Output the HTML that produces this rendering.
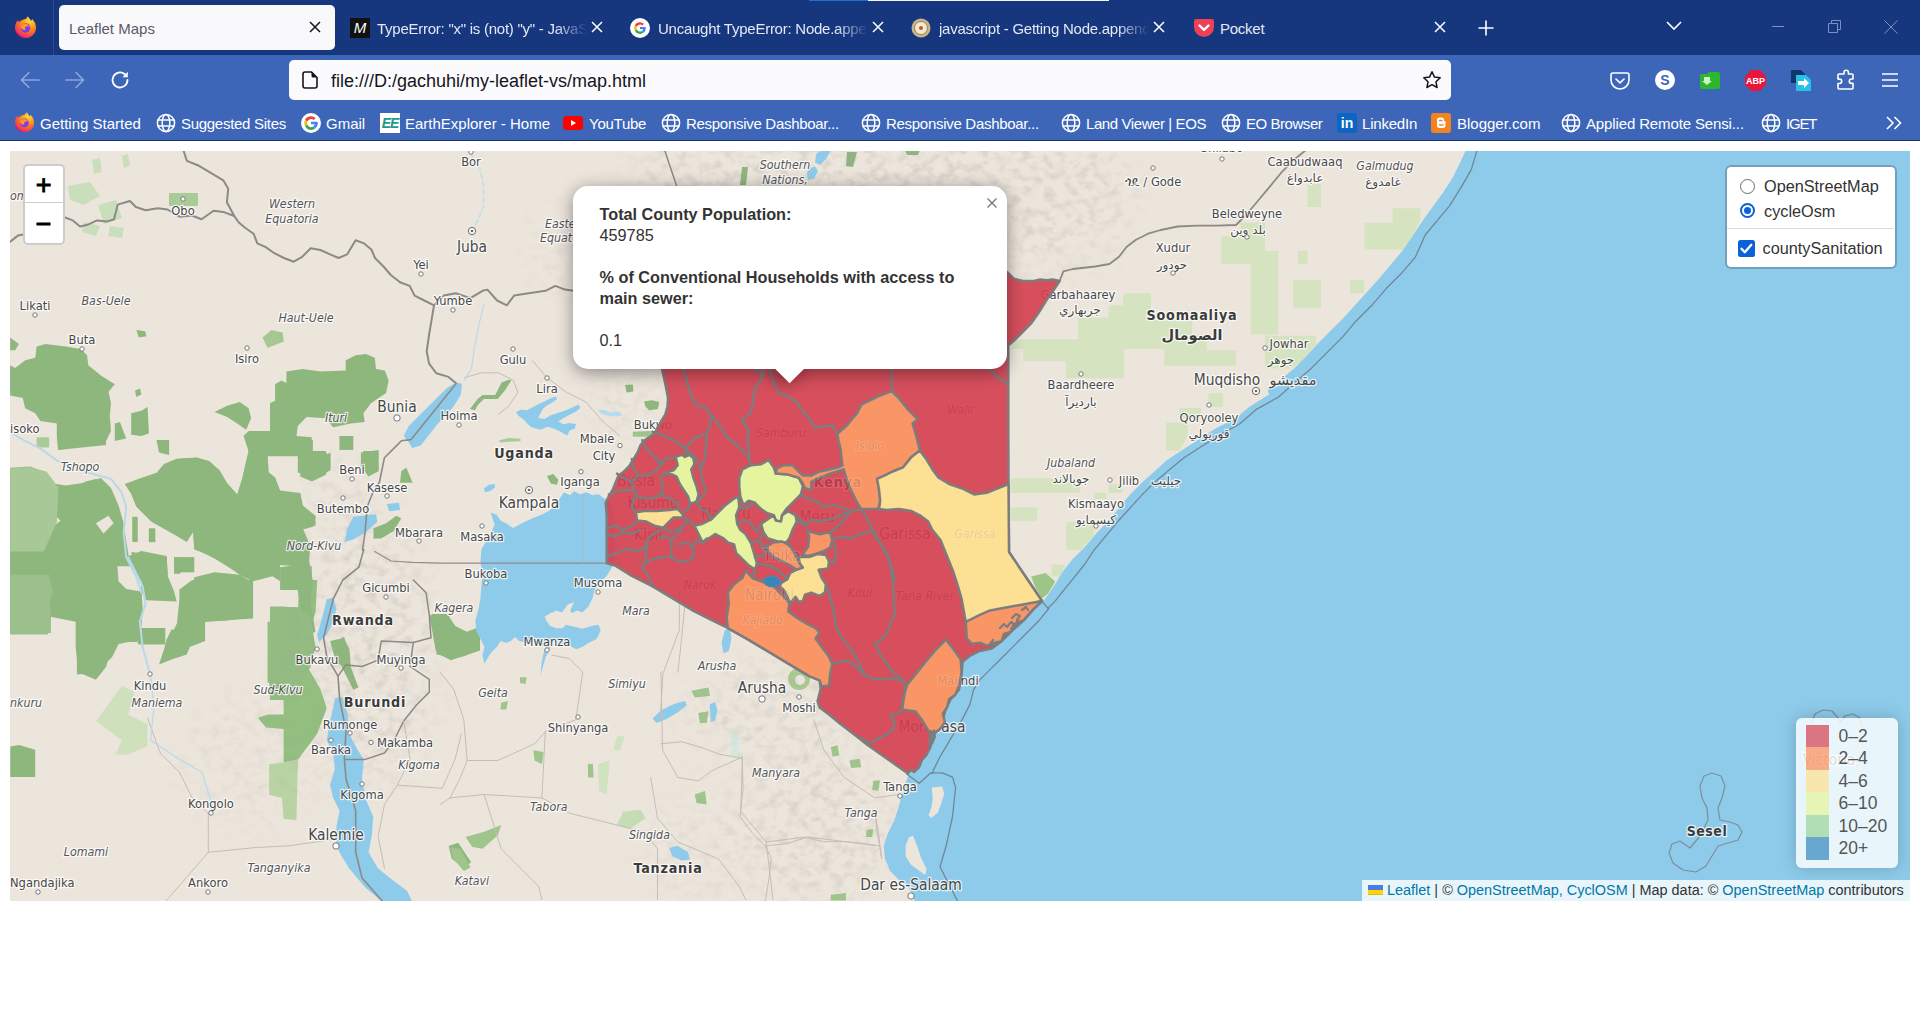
<!DOCTYPE html>
<html lang="en">
<head>
<meta charset="utf-8">
<title>Leaflet Maps</title>
<style>
*{box-sizing:border-box}
html,body{margin:0;padding:0;background:#fff;width:1920px;height:1030px;overflow:hidden}
body{font-family:"Liberation Sans","DejaVu Sans",sans-serif;position:relative}
.abs{position:absolute}
#tabbar{position:absolute;left:0;top:0;width:1920px;height:55px;background:#16377d}
#navbar{position:absolute;left:0;top:55px;width:1920px;height:85px;background:#3e66b8}
#chromeline{position:absolute;left:0;top:140px;width:1920px;height:1px;background:#1c2f63}
.tab{position:absolute;top:6px;height:45px;font-size:15px;line-height:45px;letter-spacing:-0.25px;color:#e4e8f6;white-space:nowrap;overflow:hidden}
.tab.active{top:5px;line-height:47px;letter-spacing:0;background:#f9f9fb;border-radius:5px;color:#5a5b66;left:59px;width:276px;padding-left:10px}
.tx{position:absolute;top:19px;width:16px;height:16px}
.bm{position:absolute;top:107px;height:34px;line-height:34px;font-size:15px;color:#fff;white-space:nowrap}
.ico{position:absolute}
#urlbar{position:absolute;left:289px;top:60px;width:1162px;height:40px;background:#fbfbfe;border-radius:5px}
#urltext{position:absolute;left:42px;top:0;line-height:42px;font-size:18px;color:#15141a;white-space:nowrap}
#map{position:absolute;left:10px;top:151px;width:1900px;height:750px;overflow:hidden;background:#e9e3da}
#map svg.base{position:absolute;left:0;top:0}
.lg{line-height:22.5px;white-space:nowrap}
.lk{color:#0078a8}

#map text{font-family:"DejaVu Sans","Liberation Sans",sans-serif;font-stretch:condensed;paint-order:stroke;stroke:rgba(255,255,255,.75);stroke-width:2.5px;stroke-linejoin:round;fill:#484848}
#map .c0{font-size:20px}
#map .c1{font-size:15.4px}
#map .c2{font-size:12.8px}
#map .it{font-size:12.3px;font-style:italic;fill:#555}
#map .co{font-size:14.2px;font-weight:bold;letter-spacing:.8px;fill:#3c3c3c}
#map .co2{font-size:14px;font-weight:bold;letter-spacing:.5px;fill:#3c3c3c}
#map .ar{font-size:12px;font-stretch:normal}
#map .ar1{font-size:14.5px;font-stretch:normal}
#map .arb{font-size:14.5px;font-weight:bold;font-stretch:normal;fill:#3c3c3c}

</style>
</head>
<body>
<div id="tabbar"></div>
<div id="navbar"></div>
<div id="chromeline"></div>
<!--CHROME-->
<!-- top strip -->
<div class="abs" style="left:809px;top:0;width:59px;height:1px;background:#1f6fd6"></div>
<div class="abs" style="left:868px;top:0;width:241px;height:1px;background:#f4f6fc"></div>
<!-- firefox logo -->
<svg class="abs" style="left:14px;top:16px" width="23" height="23" viewBox="0 0 24 24"><defs><radialGradient id="fxg" cx="0.7" cy="0.2" r="0.9"><stop offset="0" stop-color="#ffde3a"/><stop offset="0.45" stop-color="#ff8a16"/><stop offset="0.85" stop-color="#f2385a"/><stop offset="1" stop-color="#c60084"/></radialGradient></defs><path d="M12 3.2c1.2-1 1.8-2 2-3 2 1.6 3.2 3.4 3.6 5 .8-.6 1.2-1.4 1.3-2.2C21.600 5.600 23 8.800 23 12.200 23 18.200 18.200 23 12 23S1 18.200 1 12.200c0-3.200 1.200-6 3.200-8 .1 1 .4 1.800 1 2.400C6.600 4.800 9 3.600 12 3.200z" fill="url(#fxg)"/><circle cx="12" cy="12.500" r="5" fill="#7a3ff0"/><path d="M7 11c1-2.500 3-3.500 5.500-3 2 .5 3.500 2 4 4-.8-1-2-1.500-3.200-1.200-1.800.5-2.300 2.200-1.300 3.700-2.500.200-4.800-1.200-5-3.500z" fill="#ff9a1f"/></svg>
<div class="abs" style="left:53px;top:0;width:1px;height:55px;background:#31498f"></div>
<!-- tabs -->
<div class="tab active">Leaflet Maps</div>
<svg class="tx" style="left:307px" viewBox="0 0 16 16"><path d="M3 3l10 10M13 3L3 13" stroke="#15141a" stroke-width="1.500" fill="none"/></svg>

<div class="abs" style="left:350px;top:18px;width:20px;height:20px;background:#111;color:#fff;font-size:15px;font-style:italic;line-height:20px;text-align:center">M</div>
<div class="tab" style="left:377px;width:210px;-webkit-mask-image:linear-gradient(90deg,#000 85%,transparent)">TypeError: "x" is (not) "y" - JavaScript</div>
<svg class="tx" style="left:589px" viewBox="0 0 16 16"><path d="M3 3l10 10M13 3L3 13" stroke="#fff" stroke-width="1.500" fill="none"/></svg>

<svg class="abs" style="left:630px;top:18px" width="20" height="20" viewBox="0 0 20 20"><circle cx="10" cy="10" r="10" fill="#fff"/><path d="M10 4.200a5.800 5.800 0 0 1 4 1.600l-1.700 1.700A3.400 3.400 0 0 0 6.800 8.700L4.800 7.200A5.800 5.800 0 0 1 10 4.200z" fill="#ea4335"/><path d="M4.800 7.200l2 1.500a3.400 3.400 0 0 0 0 2.600l-2 1.500a5.800 5.800 0 0 1 0-5.600z" fill="#fbbc05"/><path d="M4.800 12.800l2-1.500a3.400 3.400 0 0 0 5.100 1.700l1.900 1.500a5.800 5.800 0 0 1-9-1.700z" fill="#34a853"/><path d="M10 8.900h5.600a5.800 5.800 0 0 1-1.800 5.600l-1.900-1.500a3.200 3.200 0 0 0 1.300-1.900H10z" fill="#4285f4"/></svg>
<div class="tab" style="left:658px;width:210px;-webkit-mask-image:linear-gradient(90deg,#000 85%,transparent)">Uncaught TypeError: Node.appendChild</div>
<svg class="tx" style="left:870px" viewBox="0 0 16 16"><path d="M3 3l10 10M13 3L3 13" stroke="#fff" stroke-width="1.500" fill="none"/></svg>

<svg class="abs" style="left:911px;top:18px" width="20" height="20" viewBox="0 0 20 20"><circle cx="10" cy="10" r="9.500" fill="#c9b48a"/><circle cx="10" cy="10" r="6.500" fill="#f3ead2" stroke="#9a8558" stroke-width="1"/><circle cx="10" cy="10" r="2" fill="#c0563a"/></svg>
<div class="tab" style="left:939px;width:210px;-webkit-mask-image:linear-gradient(90deg,#000 85%,transparent)">javascript - Getting Node.appendChild</div>
<svg class="tx" style="left:1151px" viewBox="0 0 16 16"><path d="M3 3l10 10M13 3L3 13" stroke="#fff" stroke-width="1.500" fill="none"/></svg>

<svg class="abs" style="left:1194px;top:19px" width="20" height="18" viewBox="0 0 20 18"><path d="M2 0h16a2 2 0 0 1 2 2v6a10 10 0 0 1-20 0V2a2 2 0 0 1 2-2z" fill="#ef4056"/><path d="M5.500 6.500L10 10.800l4.500-4.300" stroke="#fff" stroke-width="2.400" fill="none" stroke-linecap="round" stroke-linejoin="round"/></svg>
<div class="tab" style="left:1220px;width:100px">Pocket</div>
<svg class="tx" style="left:1432px" viewBox="0 0 16 16"><path d="M3 3l10 10M13 3L3 13" stroke="#fff" stroke-width="1.500" fill="none"/></svg>

<svg class="abs" style="left:1478px;top:20px" width="16" height="16" viewBox="0 0 16 16"><path d="M8 0.500v15M0.500 8h15" stroke="#fff" stroke-width="1.600"/></svg>
<svg class="abs" style="left:1666px;top:21px" width="16" height="10" viewBox="0 0 16 10"><path d="M1 1l7 7 7-7" stroke="#fff" stroke-width="1.600" fill="none"/></svg>
<div class="abs" style="left:1772px;top:26px;width:12px;height:1px;background:#7e8fc0"></div>
<svg class="abs" style="left:1828px;top:20px" width="14" height="14" viewBox="0 0 14 14"><path d="M0.500 3.500h9v9h-9zM3.500 3.500v-3h9v9h-3" stroke="#7e8fc0" stroke-width="1" fill="none"/></svg>
<svg class="abs" style="left:1884px;top:20px" width="14" height="14" viewBox="0 0 14 14"><path d="M0.500 0.500l13 13M13.500 0.500l-13 13" stroke="#7e8fc0" stroke-width="1" fill="none"/></svg>

<!-- nav buttons -->
<svg class="abs" style="left:20px;top:71px" width="20" height="18" viewBox="0 0 20 18"><path d="M9 1.500L1.500 9 9 16.500M1.500 9H19" stroke="#8da6dc" stroke-width="1.700" fill="none" stroke-linecap="round" stroke-linejoin="round"/></svg>
<svg class="abs" style="left:65px;top:71px" width="20" height="18" viewBox="0 0 20 18"><path d="M11 1.500L18.500 9 11 16.500M18.500 9H1" stroke="#8da6dc" stroke-width="1.700" fill="none" stroke-linecap="round" stroke-linejoin="round"/></svg>
<svg class="abs" style="left:110px;top:70px" width="20" height="20" viewBox="0 0 20 20"><path d="M17.500 10a7.500 7.500 0 1 1-2.600-5.700" stroke="#fff" stroke-width="1.800" fill="none" stroke-linecap="round"/><path d="M17.800 1.800v5.400h-5.400z" fill="#fff"/></svg>

<div id="urlbar">
<svg class="abs" style="left:13px;top:11px" width="16" height="18" viewBox="0 0 16 18"><path d="M3 1h6.500L15 6.500V15a2 2 0 0 1-2 2H3a2 2 0 0 1-2-2V3a2 2 0 0 1 2-2z" stroke="#15141a" stroke-width="1.600" fill="none"/><path d="M9.500 1v4a1.500 1.500 0 0 0 1.500 1.500h4z" fill="#15141a"/></svg>
<div id="urltext">file:///D:/gachuhi/my-leaflet-vs/map.html</div>
<svg class="abs" style="left:1133px;top:10px" width="20" height="20" viewBox="0 0 20 20"><path d="M10 1.800l2.500 5.300 5.700.7-4.200 4 1.100 5.700L10 14.700l-5.100 2.800L6 11.800l-4.200-4 5.700-.7z" stroke="#15141a" stroke-width="1.500" fill="none" stroke-linejoin="round"/></svg>
</div>

<!-- toolbar icons -->
<svg class="abs" style="left:1610px;top:72px" width="20" height="18" viewBox="0 0 20 18"><path d="M3 1h14a2 2 0 0 1 2 2v5a9 9 0 0 1-18 0V3a2 2 0 0 1 2-2z" stroke="#fff" stroke-width="1.600" fill="none"/><path d="M6 7l4 3.800L14 7" stroke="#fff" stroke-width="1.600" fill="none" stroke-linecap="round" stroke-linejoin="round"/></svg>
<div class="abs" style="left:1655px;top:70px;width:20px;height:20px;border-radius:10px;background:#fff;color:#3e66b8;font-weight:bold;font-size:14px;line-height:20px;text-align:center">S</div>
<svg class="abs" style="left:1700px;top:71px" width="20" height="18" viewBox="0 0 20 18"><path d="M0 3h7l2-2h9a2 2 0 0 1 2 2v13a2 2 0 0 1-2 2H2a2 2 0 0 1-2-2z" fill="#2fb62f"/><path d="M4 6h6v4h2l-5 4-5-4h2z" fill="#c9f5c0"/></svg>
<svg class="abs" style="left:1745px;top:70px" width="21" height="21" viewBox="0 0 21 21"><path d="M6.200 0h8.600L21 6.200v8.600L14.800 21H6.200L0 14.800V6.200z" fill="#e8173c"/><text x="10.500" y="14" font-family="Liberation Sans,sans-serif" font-size="9" font-weight="bold" fill="#fff" text-anchor="middle">ABP</text></svg>
<svg class="abs" style="left:1791px;top:70px" width="21" height="21" viewBox="0 0 21 21"><path d="M0 0h10l4 4v9H0z" fill="#12356e"/><path d="M5 5h10l5 5v11H5z" fill="#27c0e8"/><path d="M7 11h6V8l5 5-5 5v-3H7z" fill="#fff"/></svg>
<svg class="abs" style="left:1836px;top:69px" width="20" height="22" viewBox="0 0 20 22"><path d="M8 5V3.500a2.200 2.200 0 0 1 4.400 0V5H16a1 1 0 0 1 1 1v4h-1.500a2.200 2.200 0 0 0 0 4.400H17V19a1 1 0 0 1-1 1H3a1 1 0 0 1-1-1v-4.500h1.500a2.200 2.200 0 0 0 0-4.400H2V6a1 1 0 0 1 1-1z" stroke="#fff" stroke-width="1.600" fill="none" stroke-linejoin="round"/></svg>
<svg class="abs" style="left:1882px;top:73px" width="16" height="14" viewBox="0 0 16 14"><path d="M0 1h16M0 7h16M0 13h16" stroke="#fff" stroke-width="1.600"/></svg>

<!--/CHROME-->
<!--BM-->
<svg width="0" height="0" style="position:absolute"><defs>
<symbol id="globe" viewBox="0 0 20 20"><circle cx="10" cy="10" r="8.600" stroke="#fff" stroke-width="1.500" fill="none"/><ellipse cx="10" cy="10" rx="3.800" ry="8.600" stroke="#fff" stroke-width="1.500" fill="none"/><path d="M1.800 7h16.400M1.800 13h16.400" stroke="#fff" stroke-width="1.500"/></symbol>
</defs></svg>
<svg class="abs" style="left:14px;top:112px" width="21" height="21" viewBox="0 0 24 24"><path d="M12 3.200c1.200-1 1.800-2 2-3 2 1.600 3.200 3.400 3.600 5 .8-.6 1.200-1.400 1.300-2.200C21.600 5.600 23 8.800 23 12.200 23 18.200 18.200 23 12 23S1 18.200 1 12.200c0-3.200 1.200-6 3.200-8 .1 1 .4 1.800 1 2.400C6.600 4.800 9 3.600 12 3.200z" fill="url(#fxg)"/><circle cx="12" cy="12.500" r="5" fill="#7a3ff0"/><path d="M7 11c1-2.500 3-3.500 5.500-3 2 .5 3.500 2 4 4-.8-1-2-1.500-3.200-1.200-1.800.5-2.300 2.200-1.300 3.700-2.500.2-4.800-1.200-5-3.500z" fill="#ff9a1f"/></svg>
<div class="bm" style="left:40px">Getting Started</div>
<svg class="abs" style="left:156px;top:113px" width="20" height="20"><use href="#globe"/></svg>
<div class="bm" style="left:181px;letter-spacing:-0.29px">Suggested Sites</div>
<svg class="abs" style="left:301px;top:113px" width="20" height="20" viewBox="0 0 20 20"><circle cx="10" cy="10" r="10" fill="#fff"/><path d="M10 3.200a6.800 6.800 0 0 1 4.700 1.900l-2 2A4 4 0 0 0 6.300 8.500L4 6.700A6.800 6.800 0 0 1 10 3.200z" fill="#ea4335"/><path d="M4 6.700l2.300 1.800a4 4 0 0 0 0 3L4 13.300a6.800 6.800 0 0 1 0-6.600z" fill="#fbbc05"/><path d="M4 13.300l2.300-1.800a4 4 0 0 0 6 2l2.200 1.700A6.800 6.800 0 0 1 4 13.300z" fill="#34a853"/><path d="M10 8.700h6.600a6.800 6.800 0 0 1-2.100 6.500l-2.200-1.700a3.800 3.800 0 0 0 1.500-2.200H10z" fill="#4285f4"/></svg>
<div class="bm" style="left:326px">Gmail</div>
<div class="abs" style="left:380px;top:113px;width:20px;height:20px;background:#fff;color:#1f9a8a;font-size:14px;font-weight:bold;font-style:italic;line-height:20px;text-align:center;letter-spacing:-1px">EE</div>
<div class="bm" style="left:405px">EarthExplorer - Home</div>
<svg class="abs" style="left:563px;top:116px" width="20" height="14" viewBox="0 0 20 14"><rect width="20" height="14" rx="3.500" fill="#f00"/><path d="M8 4l5 3-5 3z" fill="#fff"/></svg>
<div class="bm" style="left:589px;letter-spacing:-0.25px">YouTube</div>
<svg class="abs" style="left:661px;top:113px" width="20" height="20"><use href="#globe"/></svg>
<div class="bm" style="left:686px;letter-spacing:-0.29px">Responsive Dashboar...</div>
<svg class="abs" style="left:861px;top:113px" width="20" height="20"><use href="#globe"/></svg>
<div class="bm" style="left:886px;letter-spacing:-0.29px">Responsive Dashboar...</div>
<svg class="abs" style="left:1061px;top:113px" width="20" height="20"><use href="#globe"/></svg>
<div class="bm" style="left:1086px;letter-spacing:-0.41px">Land Viewer | EOS</div>
<svg class="abs" style="left:1221px;top:113px" width="20" height="20"><use href="#globe"/></svg>
<div class="bm" style="left:1246px;letter-spacing:-0.45px">EO Browser</div>
<div class="abs" style="left:1337px;top:113px;width:20px;height:20px;border-radius:3px;background:#0a66c2;color:#fff;font-size:14px;font-weight:bold;line-height:20px;text-align:center">in</div>
<div class="bm" style="left:1362px;letter-spacing:-0.2px">LinkedIn</div>
<svg class="abs" style="left:1431px;top:113px" width="20" height="20" viewBox="0 0 20 20"><rect width="20" height="20" rx="3" fill="#f58220"/><path d="M6 7a2.500 2.500 0 0 1 2.500-2.500h2A2.500 2.500 0 0 1 13 7v1h1.500v4.500A2.500 2.500 0 0 1 12 15H8.500A2.500 2.500 0 0 1 6 12.500z" fill="#fff"/><path d="M8.500 7.500h2.500M8.500 12h3.500" stroke="#f58220" stroke-width="1.500" stroke-linecap="round"/></svg>
<div class="bm" style="left:1457px">Blogger.com</div>
<svg class="abs" style="left:1561px;top:113px" width="20" height="20"><use href="#globe"/></svg>
<div class="bm" style="left:1586px;letter-spacing:-0.13px">Applied Remote Sensi...</div>
<svg class="abs" style="left:1761px;top:113px" width="20" height="20"><use href="#globe"/></svg>
<div class="bm" style="left:1786px;letter-spacing:-1.2px">IGET</div>
<svg class="abs" style="left:1886px;top:116px" width="16" height="14" viewBox="0 0 16 14"><path d="M1 1l6 6-6 6M8.500 1l6 6-6 6" stroke="#fff" stroke-width="1.600" fill="none"/></svg>

<!--/BM-->
<div id="map">
<!--MAPSVG-->
<svg class="base" width="1900" height="750" viewBox="10 151 1900 750">
<rect x="10" y="151" width="1900" height="750" fill="#ece5dc"/>
<path d="M10.1,365.3 15.1,367.9 25.2,360.3 35.3,357.8 36.6,346.4 45.4,343.9 65.6,346.4 80.8,348.9 87.1,355.2 88.3,365.3 100.9,375.4 114.8,384.3 108.5,391.8 111,403.2 109.8,415.8 111,430.9 106,441 95.9,443.6 75.7,442.3 69.4,448.6 58,449.9 56.8,436 56.8,423.4 40.4,420.9 35.3,413.3 25.2,408.2 22.7,398.1 10.1,395.6Z" fill="#8eb77d" />
<path d="M10.1,337.6 18.9,343.9 15.1,350.2 10.1,350.2Z" fill="#8eb77d" />
<path d="M114.8,423.4 119.9,422.1 126.2,438.5 114.8,441Z" fill="#8eb77d" />
<path d="M131.2,413.3 141.3,410.8 147.6,407 148.9,433.5 141.3,436 131.2,434.7Z" fill="#8eb77d" />
<path d="M36.6,437.3 49.2,437.3 49.2,447.4 36.6,447.4Z" fill="#a9cb97" />
<path d="M135,390.6 140.1,388.5 141.3,394.4 136.3,396.9Z" fill="#8eb77d" />
<path d="M136.3,330 145.1,331.3 146.4,336.3 138.8,337.6Z" fill="#8eb77d" />
<path d="M270,403.2 275.1,400.7 275.1,384.3 281.4,380.5 286.4,383 286.4,371.6 302.8,369.1 320.5,371.6 345.7,370.4 345.7,360.3 355.8,355.2 365.9,354 374.8,357.8 376,369.1 384.9,370.4 388.6,380.5 386.1,393.1 371,403.2 363.4,413.3 364.7,422.1 350.8,423.4 333.1,427.2 325.6,418.3 306.6,417.1 297.8,425.9 296.5,436 311.7,437.3 311.7,451.1 325.6,451.1 330.6,461.2 325.6,475.1 311.7,481.4 300.3,476.4 300.3,456.2 267.5,456.2 267.5,471.3 275.1,477.6 280.1,491.5 300.3,494 302.8,506.7 315.5,516.8 312.9,526.8 302.8,529.4 307.9,544.5 302.8,557.1 300.3,567.2 311.7,566 311.7,582.4 302.8,589.9 280.1,589.9 280.1,567.2 297.8,564.7 277.6,557.1 272.6,572.3 252.4,579.8 239.7,574.8 227.1,564.7 214.5,557.1 194.3,549.6 193.1,531.9 186.8,542 174.1,534.4 151.4,521.8 136.3,506.7 131.2,494 124.9,483.9 138.8,478.9 156.5,473.8 165.3,463.8 176.7,458.7 196.8,457.4 209.5,461.2 219.6,471.3 227.1,486.5 237.2,496.6 242.3,478.9 246.1,461.2 248.6,451.1 243.5,436 248.6,430.9 270,430.9Z" fill="#8eb77d" />
<path d="M214.5,412 227.1,405.7 239.7,401.9 248.6,408.2 251.1,418.3 246.1,429.7 237.2,423.4 227.1,417.1Z" fill="#8eb77d" />
<path d="M339.4,436 353.3,436 353.3,449.9 339.4,449.9Z" fill="#8eb77d" />
<path d="M363.4,451.1 378.5,451.1 378.5,471.3 368.5,476.4 360.9,466.3Z" fill="#8eb77d" />
<path d="M401.3,471.3 406.3,467.5 412.6,482.7 400,482.7Z" fill="#8eb77d" />
<path d="M262.5,337.6 271.3,330 282.6,332.5 283.9,341.4 275.1,345.1 267.5,347.7Z" fill="#a5c893" />
<path d="M10.1,471.3 22.7,468.8 37.9,471.3 47.9,478.9 44.2,491.5 30.3,496.6 20.2,501.6 20.2,511.7 30.3,516.8 45.4,511.7 50.5,501.6 65.6,491.5 75.7,486.5 85.8,481.4 95.9,478.9 106,486.5 113.6,501.6 118.6,516.8 121.1,531.9 126.2,549.6 131.2,564.7 118.6,569.7 118.6,582.4 126.2,592.5 10.1,592.5Z" fill="#8eb77d" />
<path d="M131.2,552.1 151.4,554.6 166.6,557.1 167.8,574.8 156.5,582.4 143.8,584.9 136.3,572.3Z" fill="#8eb77d" />
<path d="M132.5,516.8 137.5,516.8 137.5,542 132.5,542Z" fill="#8eb77d" />
<path d="M148.9,529.4 155.2,529.4 155.2,542 148.9,542Z" fill="#8eb77d" />
<path d="M174.1,557.1 194.3,557.1 194.3,572.3 174.1,572.3Z" fill="#8eb77d" />
<path d="M194.3,577.3 214.5,572.3 239.7,574.8 252.4,582.4 252.4,592.5 191.8,592.5Z" fill="#8eb77d" />
<path d="M10.3,580 49.7,580 51.3,612 49.7,632.9 10.3,632.9Z" fill="#9cc38a" />
<path d="M54.5,580 141,580 142.6,608.8 134.6,628.1 133,640.9 118.6,644.1 112.1,656.9 96.1,672.9 76.9,674.5 76.9,621.7 54.5,612Z" fill="#8eb77d" />
<path d="M137.8,628.1 165,628.1 165,644.1 137.8,644.1Z" fill="#8eb77d" />
<path d="M179.4,589.6 192.2,580 253.1,580 253.1,618.4 205.1,621.7 205.1,640.9 189,647.3 176.2,656.9 160.2,663.3 166.6,644.1 173,631.3 179.4,618.4Z" fill="#8eb77d" />
<path d="M267.5,621.7 283.6,621.7 283.6,607.2 298,607.2 299.6,580 317.2,580 315.6,612 307.6,637.7 309.2,669.7 320.4,688.9 326.8,708.2 317.2,733.8 298,759.4 283.6,762.6 283.6,729 265.9,727.4 257.9,717.8 267.5,714.6 283.6,714.6 283.6,685.7 267.5,682.5Z" fill="#93bf80" />
<path d="M269.1,764.2 283.6,762.6 298,759.4 296.4,820.3 283.6,818.7 282,797.9 269.1,794.7Z" fill="#b9d4a4" />
<path d="M10.3,746.6 19.2,745 35.2,749.8 35.2,777.1 10.3,777.1Z" fill="#8eb77d" />
<path d="M429.3,615.2 448.6,615.2 455,628.1 474.2,634.5 480,637.7 480,650.5 461.4,656.9 448.6,658.5 435.8,650.5Z" fill="#8eb77d" />
<path d="M96.1,721 121.8,685.7 134.6,692.1 128.2,714.6 147.4,724.2 147.4,746.6 128.2,754.6 115.3,754.6 121.8,740.2Z" fill="#cfe0bd" />
<path d="M330,640.9 344.4,637.7 349.2,653.7 346,666.5 336.4,663.3Z" fill="#8eb77d" />
<path d="M448.6,845.9 458.2,842.7 471,862 464.6,868.4 451.8,858.8Z" fill="#8eb77d" />
<path d="M10.1,467.8 30.3,466.5 45.4,472.8 50.5,482.9 65.6,485.4 83.3,482.9 100.9,477.9 111,487.9 118.6,505.6 123.7,523.3 126.2,540.9 128.7,556.1 141.3,551 166.6,556.1 167.8,576.3 174.1,591.4 176.7,601.5 146.4,600.3 141.3,591.4 142.6,614.1 141.3,626.8 137.5,641.9 118.6,641.9 111,649.5 106,667.1 95.9,679.7 78.2,672.2 75.7,646.9 75.7,621.7 50.5,616.7 47.9,634.3 10.1,634.3Z" fill="#8eb77d" />
<path d="M124.9,484.2 141.3,477.9 156.5,472.8 164,464 176.7,458.9 196.8,457.7 209.5,461.5 219.6,470.3 227.1,482.9 237.2,494.3 242.3,477.9 246.1,462.7 248.6,452.6 267.5,455.1 268.8,472.8 275.1,477.9 280.1,490.5 300.3,493 302.8,505.6 315.5,515.7 315.5,525.8 302.8,528.3 310.4,546 309.1,561.1 312.9,581.3 310.4,601.5 312.9,616.7 315.5,631.8 302.8,636.8 302.8,616.7 297.8,591.4 297.8,566.2 280.1,564.9 280.1,581.3 272.6,576.3 252.4,581.3 242.3,576.3 227.1,566.2 214.5,558.6 194.3,548.5 193.1,530.9 186.8,540.9 174.1,533.4 151.4,520.8 136.3,505.6 131.2,493Z" fill="#8eb77d" />
<path d="M179.2,601.5 181.7,591.4 194.3,581.3 209.5,575 227.1,573.8 242.3,577.5 252.4,582.6 252.4,616.7 227.1,620.4 204.4,621.7 204.4,631.8 199.4,639.4 189.3,634.3 176.7,626.8 177.9,614.1Z" fill="#8eb77d" />
<path d="M138.8,628 165.3,628 165.3,644.4 138.8,644.4Z" fill="#8eb77d" />
<path d="M171.6,629.3 181.7,631.8 191.8,641.9 186.8,654.5 171.6,659.6 159,664.6 164,649.5 166.6,639.4Z" fill="#8eb77d" />
<path d="M132.5,517 137.5,517 137.5,540.9 132.5,540.9Z" fill="#8eb77d" />
<path d="M148.9,528.3 155.2,528.3 155.2,542.2 148.9,542.2Z" fill="#8eb77d" />
<path d="M174.1,557.4 180.4,557.4 180.4,573.8 174.1,573.8Z" fill="#8eb77d" />
<path d="M270,606.6 282.6,606.6 297.8,607.8 310.4,616.7 312.9,631.8 315.5,646.9 310.4,667.1 302.8,679.7 297.8,699.9 270,699.9 268.8,667.1 270,641.9Z" fill="#93bb82" />
<path d="M58,440 106,440 106,445 58,450.1Z" fill="#8eb77d" />
<path d="M156.5,440 169.1,440 169.1,455.1 159,452.6Z" fill="#8eb77d" />
<path d="M247.3,440 267.5,440 267.5,455.1 248.6,452.6Z" fill="#8eb77d" />
<path d="M297.8,440 312.9,440 312.9,475.3 297.8,472.8Z" fill="#8eb77d" />
<path d="M325.6,455.1 330.6,452.6 330.6,470.3 325.6,472.8Z" fill="#8eb77d" />
<path d="M360.9,452.6 378.5,450.1 378.5,470.3 368.5,475.3 360.9,465.2Z" fill="#8eb77d" />
<path d="M333.1,646.9 343.2,636.8 349.5,649.5 350.8,667.1 358.4,687.3 353.3,689.8 345.7,674.7 338.2,659.6Z" fill="#8eb77d" />
<path d="M431.5,614.1 446.7,614.1 451.7,624.2 466.9,631.8 480,626.8 480,649.5 466.9,654.5 451.7,657 436.6,654.5 434.1,636.8Z" fill="#8eb77d" />
<path d="M373.5,528.3 386.1,523.3 396.2,515.7 401.3,518.2 393.7,530.9 381.1,538.4 373.5,538.4Z" fill="#8eb77d" />
<path d="M18.9,508.1 30.3,503.1 50.5,510.7 60.6,520.8 50.5,528.3 35.3,518.2 22.7,515.7Z" fill="#ece5dc" />
<path d="M117.4,566.2 131.2,566.2 141.3,581.3 141.3,591.4 126.2,588.9 118.6,581.3Z" fill="#ece5dc" />
<path d="M95.9,523.3 108.5,515.7 113.6,523.3 103.5,533.4Z" fill="#ece5dc" />
<path d="M10.1,581.3 50.5,581.3 53,591.4 45.4,614.1 50.5,616.7 47.9,634.3 10.1,634.3Z" fill="#9ac08a" />
<path d="M742,167 748,167 746,185 740,185Z" fill="#8eb77d" />
<path d="M847,152 857,152 853,167 846,166Z" fill="#8eb77d" />
<path d="M905,150 920,150 918,155 907,155Z" fill="#8eb77d" />
<path d="M440,614 450.9,619.4 461.8,635.8 472.6,630.3 476.7,646.6 467.2,654.8 450.9,660.2 440,654.8Z" fill="#8eb77d" />
<circle cx="799" cy="679" r="11" fill="#a9c98f"/><circle cx="800" cy="680" r="5" fill="#e8e4e0"/>
<path d="M1307.5,184 1320.9,184 1320.9,207 1307.5,207Z" fill="#d5e3c1" />
<path d="M1364.6,222.8 1392.5,222.8 1392.5,208.3 1420.4,208.3 1420.4,220.4 1404.6,249.5 1364.6,249.5Z" fill="#d5e3c1" />
<path d="M1221.4,236.2 1240.8,236.2 1240.8,222.8 1265,222.8 1265,250.7 1278.4,250.7 1278.4,334.5 1250.5,334.5 1250.5,264.1 1221.4,264.1Z" fill="#d5e3c1" />
<path d="M1293,279.9 1320.9,279.9 1320.9,307.8 1293,307.8Z" fill="#d5e3c1" />
<path d="M1350,279.9 1364.1,279.9 1364.1,293.2 1350,293.2Z" fill="#d5e3c1" />
<path d="M1297.8,250.7 1307.5,250.7 1307.5,264.1 1297.8,264.1Z" fill="#d5e3c1" />
<path d="M1123.1,294.4 1151,294.4 1151,321.1 1136.4,321.1 1136.4,334.5 1123.1,334.5 1123.1,349 1108.5,349 1108.5,334.5 1100,334.5 1100,321.1 1108.5,321.1 1108.5,307.8 1123.1,307.8Z" fill="#d5e3c1" />
<path d="M1159.5,321.1 1192.2,321.1 1192.2,334.5 1206.8,334.5 1206.8,350.2 1235.9,350.2 1235.9,366 1164.3,366 1164.3,349 1151,349 1151,334.5 1159.5,334.5Z" fill="#d5e3c1" />
<path d="M1265,335.7 1316,335.7 1316,344.2 1301.5,361.2 1291.7,368.4 1265,368.4Z" fill="#d5e3c1" />
<path d="M1100,364.8 1123.1,364.8 1123.1,378.2 1100,378.2Z" fill="#d5e3c1" />
<path d="M1011.2,339.3 1078,339.3 1078,317.5 1109.5,317.5 1109.5,305.3 1124.1,305.3 1124.1,293.2 1150.8,293.2 1150.8,319.9 1160,319.9 1160,349 1124.1,349 1124.1,378.2 1065.8,378.2 1065.8,361.2 1023.3,361.2 1023.3,349 1011.2,349Z" fill="#d5e3c1" />
<path d="M1010.4,478.3 1079.6,478.3 1079.6,492.9 1010.4,492.9Z" fill="#d5e3c1" />
<path d="M1010.4,507.4 1037.1,507.4 1037.1,520.8 1010.4,520.8Z" fill="#d5e3c1" />
<path d="M1066.3,522 1094.2,522 1094.2,535.3 1080.8,549.9 1066.3,549.9Z" fill="#d5e3c1" />
<path d="M1094.2,492.9 1106.3,492.9 1106.3,498.9 1094.2,498.9Z" fill="#d5e3c1" />
<path d="M1108.7,484.4 1122.1,484.4 1122.1,492.9 1108.7,492.9Z" fill="#d5e3c1" />
<path d="M1051.7,564.5 1065,564.5 1060.2,576.6 1051.7,576.6Z" fill="#d5e3c1" />
<path d="M1031.1,576.6 1045.6,573 1055.3,581.5 1048.1,593.6 1042,598.4 1035.9,588.7Z" fill="#9dc586" />
<path d="M1165.8,422.5 1187.6,422.5 1187.6,435.8 1179.1,450.4 1165.8,450.4Z" fill="#d5e3c1" />
<path d="M1208.3,393.3 1222.8,393.3 1222.8,406.7 1208.3,406.7Z" fill="#d5e3c1" />
<path d="M1179.1,407.9 1201,407.9 1201,418.8 1179.1,418.8Z" fill="#d5e3c1" />
<path d="M625.2,385 632.8,384.4 633.4,391.4 626.5,392.6Z" fill="#8eb77d" />
<path d="M644.1,401.5 651.7,400.2 659.3,402.1 658,409 649.2,410.3 645.4,406.5Z" fill="#8eb77d" />
<path d="M632.8,431.7 651.7,431.1 651.7,436.8 632.8,436.8Z" fill="#9fc48c" />
<path d="M547,475.9 553.3,474 558.3,479.7 557.1,484.7 550.8,483.5Z" fill="#8eb77d" />
<path d="M470,409 477.6,398.9 482.6,395.1 495.2,395.1 501.5,382.5 507.9,380 511.6,380 505.3,390.1 497.8,398.9 483.9,398.9 477.6,405.2 475,410.3Z" fill="#8eb77d" />
<path d="M499,440.6 507.9,438 520.5,438.7 520.5,441.2 507.9,441.8 500.3,442.5Z" fill="#a9cb97" />
<path d="M169,193 198,193 198,206 169,206Z" fill="#a9cb97" />
<path d="M68,186 90,182 100,196 84,205 70,200Z" fill="#c9debb" />
<path d="M98,205 116,200 122,218 104,224Z" fill="#c9debb" />
<path d="M84,222 100,226 96,236 82,232Z" fill="#c9debb" />
<path d="M110,226 124,228 122,238 108,236Z" fill="#c9debb" />
<path d="M92,160 100,158 102,172 94,174Z" fill="#c9debb" />
<path d="M122,156 128,154 130,166 124,168Z" fill="#c9debb" />
<path d="M533.4,750.3 543.6,752 541.9,763.9 534.5,760.5Z" fill="#9fc48c" />
<path d="M587.8,763.9 592.9,763.9 593.6,777.5 588.1,777.5Z" fill="#9fc48c" />
<path d="M598,763.9 609.9,760.5 606.5,794.5 599,791.1Z" fill="#cfe3c0" />
<path d="M616.7,736.7 625.2,735 620.1,750.3 613.3,750.3Z" fill="#cfe3c0" />
<path d="M623.5,811.4 640.5,809.7 645.6,818.2 630.3,828.4 616.7,825Z" fill="#c5dcb5" />
<path d="M694.8,794.5 705,791.1 706.7,804.6 696.5,802.9Z" fill="#9fc48c" />
<path d="M698.2,712.9 708.4,711.2 706.7,723.1 699.9,723.1Z" fill="#9fc48c" />
<path d="M691.4,690.8 708.4,687.4 710.1,695.9 694.8,697.6Z" fill="#9fc48c" />
<path d="M465.5,836.9 484.2,831.8 501.2,825 497.8,835.2 482.5,848.8 472.3,847.1Z" fill="#9fc48c" />
<path d="M450.2,847.1 460.4,848.8 470.6,867.5 463.8,870.9 453.6,859Z" fill="#9fc48c" />
<path d="M501.2,702.7 508,701 506.3,709.5 500.5,709.5Z" fill="#9fc48c" />
<path d="M519.9,677.2 526.6,677.2 525.6,684 520.2,683Z" fill="#9fc48c" />
<path d="M730.5,733.3 739,733.3 739,757.1 731.5,757.1Z" fill="#d5e8e0" />
<path d="M830.8,746.9 837.6,745.2 839.3,755.4 832.5,756.4Z" fill="#9fc48c" />
<path d="M849.4,760.5 859.6,758.8 861.3,767.3 851.1,768Z" fill="#9fc48c" />
<path d="M873.2,780.9 880,780.2 878.3,791.1 872.2,789.7Z" fill="#9fc48c" />
<path d="M866.4,830.1 873.2,829.1 872.2,836.9 866.1,836.9Z" fill="#9fc48c" />
<path d="M830.8,894.7 846,893 846,900.5 830.8,900.5Z" fill="#9fc48c" />
<path d="M10.2,468.5 29.1,467 46.6,471.4 58.3,487.4 56.8,522.3 43.7,551.5 10.2,551.5Z" fill="#a8c898" />
<path d="M10.2,574.8 49.5,574.8 51,633 10.2,633Z" fill="#9cc08b" />
<defs><filter id="relief" x="0" y="0" width="100%" height="100%"><feTurbulence type="fractalNoise" baseFrequency="0.09 0.11" numOctaves="3" seed="7"/><feColorMatrix type="matrix" values="0 0 0 0 0.36  0 0 0 0 0.34  0 0 0 0 0.31  2.2 0 0 0 -0.95"/></filter><filter id="blur20"><feGaussianBlur stdDeviation="22"/></filter>
<mask id="hl" maskUnits="userSpaceOnUse" x="10" y="151" width="1900" height="750"><g filter="url(#blur20)" fill="#fff"><ellipse cx="880" cy="185" rx="250" ry="95"/><ellipse cx="1040" cy="215" rx="90" ry="60" opacity=".6"/><ellipse cx="370" cy="655" rx="62" ry="135"/><ellipse cx="340" cy="520" rx="40" ry="60" opacity=".7"/><ellipse cx="770" cy="715" rx="85" ry="55" opacity=".8"/><ellipse cx="820" cy="830" rx="75" ry="75"/><ellipse cx="700" cy="850" rx="60" ry="50" opacity=".6"/><ellipse cx="625" cy="405" rx="32" ry="34" opacity=".8"/><ellipse cx="590" cy="250" rx="70" ry="45" opacity=".5"/><ellipse cx="250" cy="760" rx="70" ry="70" opacity=".5"/></g></mask></defs>
<rect x="10" y="151" width="1900" height="750" filter="url(#relief)" mask="url(#hl)" opacity=".32"/>
<path d="M1466.5,148.8 1459.2,164.6 1451.9,179.1 1442.2,193.7 1432.5,207 1422.8,220.4 1413.1,235 1403.4,249.5 1391.3,264.1 1379.1,278.6 1367,292 1354.9,305.3 1342.7,318.7 1330.6,330.8 1318.4,343 1306.3,356.3 1294.2,368.4 1279.6,380.6 1267.5,389.1 1268.9,394.6 1249.5,406.7 1235,418.8 1215.5,428.5 1198.5,439.5 1181.6,450.4 1167,460.1 1154.9,471 1142.7,481.9 1130.6,494.1 1118.4,508.6 1108.7,520.8 1096.6,532.9 1084.5,547.5 1072.3,559.6 1062.6,571.7 1055.3,583.9 1048.1,594.8 1043.2,600.9 1040.3,600 1033,609.7 1023.3,620.6 1011.2,631.6 1001.5,641.3 991.7,648.5 979.6,651 969.9,655.8 962.6,661.9 961.4,675.2 959,689.8 950.5,699.5 945.6,709.2 943.2,718.9 935.9,731.1 932.3,740.8 926.2,755.3 918.9,767.5 909.2,773.5 908.8,774 905.6,783.3 901.5,795.8 898.3,808.3 894.2,820.8 887.9,833.3 883.8,845.8 884.8,858.3 890,870.8 898.3,879.2 908.8,887.5 912.9,895.8 915,903.1 1915,905 1915,145Z" fill="#8ecbea" />
<path d="M931.7,787.5 942.1,786.5 944.2,793.8 941,804.2 937.9,812.5 931.7,817.7 928.5,815.6 931.7,806.2 932.7,797.9Z" fill="#ece5dc" />
<path d="M908.8,837.5 912.9,835.4 917.1,845.8 921.2,858.3 926.5,868.8 925.4,875 919.2,870.8 910.8,864.6 905.6,856.2 905.6,845.8Z" fill="#ece5dc" />
<path d="M490.6,512.6 496.7,514.7 500.8,520.8 506.9,523.8 513,527.9 521.1,523.8 531.3,518.7 541.5,514.7 549.7,510.6 555.8,504.5 559.9,498.3 564,492.2 570.1,495.3 574.1,491.2 580.3,494.3 586.4,492.2 592.5,495.3 598.6,494.3 603.7,498.3 610.8,500.4 614.9,520.8 614.9,561.5 611.9,567.6 606.8,575.8 600.6,581.9 594.5,590.1 592.5,598.2 588.4,606.4 582.3,612.5 574.1,616.6 570.1,610.5 574.1,602.3 568,604.3 561.9,612.5 555.8,610.5 549.7,614.5 545.6,620.6 551.7,624.7 561.9,628.8 566,624.7 574.1,626.8 582.3,628.8 592.5,625.7 598.6,624.7 600.6,630.8 596.6,639 588.4,643.1 582.3,647.1 576.2,649.2 570.1,646.1 561.9,645.1 553.8,641 549.7,649.2 545.6,657.3 542.6,667.5 540.5,675.7 541.5,663.4 543.6,653.3 545.6,647.1 537.5,643.1 527.3,643.1 519.1,641 515,637 511,641 505.9,643.1 500.8,641 496.7,647.1 490.6,653.3 484.5,663.4 482.4,655.3 484.5,647.1 480.4,639 476.3,630.8 475.3,620.6 478.3,610.5 480.4,598.2 481.4,586 482.4,573.8 480.4,561.5 481.4,549.3 486.5,541.1 490.6,533 494.7,524.8 492.6,518.7Z" fill="#8ecbea" />
<path d="M544.6,616.6 551.7,612.5 557.8,616.6 561.9,624.7 557.8,628.8 549.7,625.7Z" fill="#ece5dc" />
<path d="M571.1,613.5 577.2,610.5 582.3,612.5 578.2,618.6 572.1,619.6Z" fill="#ece5dc" />
<path d="M456,382.5 462,383.7 460.8,394.7 454.8,404.4 447.5,414.1 437.8,423.8 428.1,435.9 420.8,445.6 412.3,448.1 408.6,442 403.8,435.9 408.6,426.2 418.3,416.5 428.1,406.8 437.8,397.1 447.5,387.4Z" fill="#8ecbea" />
<path d="M516.1,412.2 520.5,409.7 526.8,410.3 533.1,407.1 538.8,404 544.4,401.5 550.8,398.3 555.8,396.4 557.1,398.9 552,402.7 547,405.2 543.2,408.4 540.7,412.8 538.1,417.9 544.4,419.1 550.8,415.3 558.3,412.8 565.9,410.3 573.5,407.1 578.5,404.6 580.4,407.8 576,411.5 569.7,414.7 563.4,417.9 558.3,421.6 563.4,424.2 569.7,422.9 576,424.2 574.7,428.6 569.7,430.5 567.2,435.5 562.7,433 558.3,430.5 553.3,428.6 548.2,426.7 544.4,427.9 540.7,429.8 535.6,428.6 530.6,426.7 526.8,422.9 523,419.1 518.6,416Z" fill="#8ecbea" />
<path d="M353.3,516.8 376,514.2 377.3,521.8 365.9,531.9 353.3,539.5 344.5,542 347,529.4Z" fill="#8ecbea" />
<path d="M386.8,503.9 398.9,502.7 400.1,510 389.2,511.2Z" fill="#8ecbea" />
<path d="M326.8,599.2 333.2,597.6 336.4,608.8 333.2,621.7 326.8,634.5 318.8,642.5 317.2,634.5 322,618.4Z" fill="#8ecbea" />
<path d="M334.8,698.6 342.8,696.9 347.6,714.6 349.2,733.8 355.7,746.6 363.7,759.4 362.1,778.7 365.3,797.9 373.3,817.1 371.7,836.3 368.5,852.3 378.1,868.4 394.1,881.2 406.9,890.8 413.3,903.6 384.5,903.6 365.3,887.6 349.2,868.4 341.2,855.6 336.4,845.9 336.4,826.7 339.6,810.7 333.2,797.9 330,785.1 334.8,769 333.2,753 326.8,740.2 330,721 333.2,708.2Z" fill="#8ecbea" />
<path d="M652.5,718.8 660.8,710.4 673.3,704.2 684.8,701 686.9,705.2 677.5,712.5 667.1,718.8 656.7,722.9Z" fill="#8ecbea" />
<path d="M709.8,704.2 715,702.1 717.5,710.4 715,720.8 710.8,721.9Z" fill="#8ecbea" />
<path d="M669.2,847.9 677.5,845.8 687.9,852.1 690,859.4 681.7,860.4 672.3,856.2Z" fill="#8ecbea" />
<path d="M724.7,630.2 729.9,628.1 731.5,638.6 728.8,651.1 723.6,653.2 721.5,642.7Z" fill="#8ecbea" />
<path d="M816.2,153.8 822.5,150 831.2,150 826.2,158.8 820,165 815,162.5Z" fill="#8ecbea" />
<path d="M808.8,168.8 815,166.2 818,171.2 813.8,178.8 808,180 807,173.8Z" fill="#8ecbea" />
<path d="M597.4,410.3 603.8,409.7 611.3,412.8 618.9,411.5 622.7,415.3 616.4,416.6 608.8,416 601.2,413.4Z" fill="#b5dbee" />
<path d="M483.9,488.5 488.9,484.7 494.6,484.1 495.2,487.3 490.2,491 485.1,492.3Z" fill="#8ecbea" />
<path d="M10.2,241.7 18.2,235.4 24.3,234.2 43.7,222.8 63.1,216.7 72.8,220.4 80.1,226.5 87.4,224.8 97.1,220.4 106.8,221.6 114.1,219.2 117.7,204.6 129.9,201 135.9,207 145.6,210.2 157.8,208.3 167.5,209.5 179.6,216.7 191.7,215.5 201.5,219.2 213.6,210.7 223.3,211.9 234.2,216" fill="none" stroke="#8c8a86" stroke-width="2" stroke-linejoin="round" stroke-linecap="round" />
<path d="M183.3,150 186.9,160.9 199,165.8 211.2,173.1 223.3,180.3 228.2,188.8 226.9,202.2 234.2,216 239.1,222.8 245.1,227.7 253.6,233.7 257.3,243.4 265.8,247.1 274.3,253.2 284,258 293.7,261.7 302.2,256.8 310.7,248.3 320.4,250 330.1,254.4 338.6,258 347.1,254.4 355.6,240.3 364.1,243.4 371.4,249.5 375,258 383.5,266.5 390.8,275 400,282.3" fill="none" stroke="#8c8a86" stroke-width="2" stroke-linejoin="round" stroke-linecap="round" />
<path d="M400,282.3 409.7,285.9 414.6,295.6 424.3,300.5 434,305.3 443.7,295.6 455.8,293.2 470.4,298.1 482.5,290.8 487.4,289.6 497.1,300.5 506.8,305.3 514.1,295.6 528.6,293.2 545.6,290.8 555.3,285.9 565,289.6 573.5,290.8" fill="none" stroke="#8c8a86" stroke-width="2" stroke-linejoin="round" stroke-linecap="round" />
<path d="M434,305.3 431.6,319.9 429.1,334.5 426.7,351.5 429.1,363.6 436.4,373.3 448.5,376.9 455.8,383" fill="none" stroke="#8c8a86" stroke-width="2" stroke-linejoin="round" stroke-linecap="round" />
<path d="M456,383.7 411.1,439.6 401.4,440.8 394.1,448.1 384.4,457.8 381.9,469.9 379.5,482 372.2,494.2 367.4,506.3 366.2,518.4 365,533 362.5,550" fill="none" stroke="#8c8a86" stroke-width="1.6" stroke-linejoin="round" stroke-linecap="round" />
<path d="M363.7,549.6 358.9,567.2 342.8,580 333.2,599.2 323.6,637.7 326.8,656.9 338,676.1 339.6,698.6 346,730.6 344.4,759.4 346,778.7 355.7,810.7 355.7,852.3 362.1,878 384.5,903.6" fill="none" stroke="#8c8a86" stroke-width="1.6" stroke-linejoin="round" stroke-linecap="round" />
<path d="M413.3,580 426.1,592.8 429.3,615.2 431,637.7 413.3,642.5 381.3,640.9 378.1,660.1 362.1,666.5 346,664.9 338,676.1" fill="none" stroke="#8c8a86" stroke-width="1.5" stroke-linejoin="round" stroke-linecap="round" />
<path d="M413.3,642.5 410.1,666.5 429.3,679.3 429.3,692.1 416.5,705 403.7,721 394.1,740.2 384.5,753 365.3,759.4 346,759.4" fill="none" stroke="#8c8a86" stroke-width="1.5" stroke-linejoin="round" stroke-linecap="round" />
<path d="M374.7,551.5 391.1,561 412.8,562.3 440,563.2 606.4,563.2" fill="none" stroke="#8f8d8a" stroke-width="1.2" stroke-linejoin="round" stroke-linecap="round" />
<path d="M583.3,494.4 583.3,563.2" fill="none" stroke="#a9b9c4" stroke-width="0.8" stroke-linejoin="round" stroke-linecap="round" />
<path d="M664.6,150 669.4,164.6 674.3,179.1 676.7,185.9" fill="none" stroke="#8c8a86" stroke-width="1.5" stroke-linejoin="round" stroke-linecap="round" />
<path d="M1059.6,281 1063.4,271.4 1073,269 1095,266.5 1109.5,264 1119,256.8 1126.5,247 1136,239.8 1148,233.7 1160.7,230 1177.7,226.5 1197,225.7 1216.5,225.7 1236,225 1245.6,215.5 1257.8,201 1270,186.4 1282,171.8 1294,159.7 1306,150" fill="none" stroke="#8c8a86" stroke-width="1.8" stroke-linejoin="round" stroke-linecap="round" />
<path d="M1477.4,148.8 1471.4,169.4 1461.7,186.4 1449.5,205.8 1437.4,220.4 1425.2,235 1415.5,256.8 1401,273.8 1386.4,288.3 1371.8,305.3 1354.9,322.3 1342.7,336.9 1325.7,353.9 1311.2,368.4 1294.2,383 1278.6,397 1256.8,409.1 1239.8,423.7 1220.4,434.6 1201,446.7 1184,457.7 1169.4,469.8 1154.9,481.9 1142.7,494.1 1130.6,507.4 1118.4,520.8 1106.3,535.3 1094.2,549.9 1084.5,564.5 1074.8,576.6 1065,588.7 1055.3,600.9 1048.1,608.2 1048.8,608.5 1037.9,621.8 1025.7,634 1013.6,646.1 1001.5,658.3 989.3,670.4 979.6,680.1 973.5,689.8 969.9,704.4 962.6,718.9 955.3,731.1 948.1,743.2 940.8,755.3 933.5,769.9 932.3,773.5" fill="none" stroke="#6f8896" stroke-width="1.3" stroke-linejoin="round" stroke-linecap="round" />
<path d="M1040.8,600.4 1048.1,608.2" fill="none" stroke="#6f8896" stroke-width="1.3" stroke-linejoin="round" stroke-linecap="round" />
<path d="M930.6,772.9 942.1,772.9 952.5,777.1 955.6,787.5 952.5,816.7 946.2,845.8 940,866.7 948.3,883.3 958.8,903.1" fill="none" stroke="#6f8896" stroke-width="1.3" stroke-linejoin="round" stroke-linecap="round" />
<path d="M930.6,772.9 919.2,783.3 906.7,774" fill="none" stroke="#6f8896" stroke-width="1.3" stroke-linejoin="round" stroke-linecap="round" />
<path d="M1690,848 1700,836 1708,820 1707,808 1702,798 1700,786 1704,776 1712,773 1721,776 1725,786 1722,798 1718,808 1720,820 1730,822 1738,825 1742,832 1738,840 1728,843 1718,846 1712,856 1706,866 1696,872 1683,870 1673,863 1669,853 1672,844 1680,841 1690,848" fill="none" stroke="#7d8f9a" stroke-width="1.2" stroke-linejoin="round" stroke-linecap="round" />
<path d="M1812,722 1815,714 1823,710 1832,711 1838,718 1840,722 1845,716 1853,714 1860,718 1862,726" fill="none" stroke="#7d8f9a" stroke-width="1.2" stroke-linejoin="round" stroke-linecap="round" />
<path d="M742.1,758.3 743.1,787.5 740,816.7 752.5,833.3 765,845.8 785.8,843.8 806.7,837.5 823.3,841.7 848.3,841.7 879.6,845.8" fill="none" stroke="#c4beb6" stroke-width="1" stroke-linejoin="round" stroke-linecap="round" />
<path d="M660.8,743.8 681.7,741.7 702.5,747.9 719.2,754.2 742.1,758.3" fill="none" stroke="#c4beb6" stroke-width="1" stroke-linejoin="round" stroke-linecap="round" />
<path d="M765,845.8 771.2,858.3 769.2,877.1 765,903.1" fill="none" stroke="#c4beb6" stroke-width="1" stroke-linejoin="round" stroke-linecap="round" />
<path d="M875.4,812.5 876.5,829.2 879.6,845.8 881.7,858.3" fill="none" stroke="#c4beb6" stroke-width="1" stroke-linejoin="round" stroke-linecap="round" />
<path d="M679.3,592.3 679.3,630.3 662.9,673.8 660.2,720" fill="none" stroke="#c4beb6" stroke-width="1" stroke-linejoin="round" stroke-linecap="round" />
<path d="M147.4,717.8 160.2,753 179.4,772.2 192.2,797.9 208.3,813.9 208.3,852.3 166.6,900.4" fill="none" stroke="#c4beb6" stroke-width="1" stroke-linejoin="round" stroke-linecap="round" />
<path d="M208.3,852.3 256.3,847.5 288.4,845.9 333.2,839.5" fill="none" stroke="#c4beb6" stroke-width="1" stroke-linejoin="round" stroke-linecap="round" />
<path d="M403.7,721 410.1,759.4 397.3,785.1 384.5,804.3 378.1,836.3 384.5,868.4" fill="none" stroke="#c4beb6" stroke-width="1" stroke-linejoin="round" stroke-linecap="round" />
<path d="M397.3,785.1 442.2,788.3 455,759.4 461.4,733.8" fill="none" stroke="#c4beb6" stroke-width="1" stroke-linejoin="round" stroke-linecap="round" />
<path d="M464.5,377.7 481.5,372.8 498.4,372.8 513,380.1 517.9,392.2 508.2,406.8 498.4,414.1" fill="none" stroke="#c4beb6" stroke-width="1" stroke-linejoin="round" stroke-linecap="round" />
<path d="M532.4,360.7 547,377.7 566.4,392.2 585.8,401.9 602.8,421.4 619.8,435.9" fill="none" stroke="#c4beb6" stroke-width="1" stroke-linejoin="round" stroke-linecap="round" />
<path d="M10.1,432.2 25.2,441 40.4,448.6 58,461.2 83.3,471.3 111,478.9 121.1,491.5 126.2,506.7 123.7,531.9 126.2,557.1 136.3,577.3 141.3,592.5" fill="none" stroke="#b9d9ea" stroke-width="2" stroke-linejoin="round" stroke-linecap="round" />
<path d="M150.6,674.5 153.8,708.2 150.6,740.2 179.4,759.4 201.9,772.2 209.9,797.9 211.5,813.9" fill="none" stroke="#b9d9ea" stroke-width="1.2" stroke-linejoin="round" stroke-linecap="round" />
<path d="M470.4,152.4 480.1,169.4 483.7,186.4 483.7,205.8 477.7,220.4 472.8,230.1" fill="none" stroke="#bfe0ea" stroke-width="1.6" stroke-linejoin="round" stroke-linecap="round" stroke-dasharray="5 3"/>
<path d="M464.5,380.1 471.7,368 474.2,348.5 479,324.3 483.9,304.9" fill="none" stroke="#b9d9ea" stroke-width="1.2" stroke-linejoin="round" stroke-linecap="round" />
<path d="M440,672.1 453.6,689.1 463.8,719.7 467.2,760.5 460.4,777.5 450.2,797.9 440,804.6" fill="none" stroke="#c4beb6" stroke-width="1" stroke-linejoin="round" stroke-linecap="round" />
<path d="M467.2,760.5 497.8,760.5 535.1,743.5 545.3,731.6 575.9,719.7 582.7,672.1 569.1,658.5 552.1,655.1" fill="none" stroke="#c4beb6" stroke-width="1" stroke-linejoin="round" stroke-linecap="round" />
<path d="M545.3,731.6 541.9,797.9 569.1,813.1 616.7,825 643.9,831.8 657.5,848.8 657.5,899.8" fill="none" stroke="#c4beb6" stroke-width="1" stroke-linejoin="round" stroke-linecap="round" />
<path d="M450.2,797.9 484.2,794.5 541.9,797.9" fill="none" stroke="#c4beb6" stroke-width="1" stroke-linejoin="round" stroke-linecap="round" />
<path d="M484.2,794.5 501.2,848.8 524.9,872.6 538.5,886.2 541.9,899.8" fill="none" stroke="#c4beb6" stroke-width="1" stroke-linejoin="round" stroke-linecap="round" />
<path d="M660.9,672.1 662.6,750.3 677.9,777.5 698.2,780.9 711.8,770.7 742.4,757.1" fill="none" stroke="#c4beb6" stroke-width="1" stroke-linejoin="round" stroke-linecap="round" />
<path d="M742.4,757.1 740.7,811.4 766.2,842 773,899.8" fill="none" stroke="#c4beb6" stroke-width="1" stroke-linejoin="round" stroke-linecap="round" />
<path d="M766.2,842 807,836.9 874.9,845.4" fill="none" stroke="#c4beb6" stroke-width="1" stroke-linejoin="round" stroke-linecap="round" />
<path d="M874.9,811.4 878.3,831.8 881.7,859" fill="none" stroke="#c4beb6" stroke-width="1" stroke-linejoin="round" stroke-linecap="round" />
<path d="M650.7,777.5 657.5,818.2 677.9,842 718.6,859 739,886.2 745.8,899.8" fill="none" stroke="#c4beb6" stroke-width="1" stroke-linejoin="round" stroke-linecap="round" />
<path d="M677.9,672.1 681.3,641.5 684.6,607.6" fill="none" stroke="#c4beb6" stroke-width="1" stroke-linejoin="round" stroke-linecap="round" />
<path d="M813.8,719.7 824,750.3 844.3,777.5 874.9,797.9 898.7,794.5" fill="none" stroke="#c4beb6" stroke-width="1" stroke-linejoin="round" stroke-linecap="round" />
<path d="M128.2,557.3 142.7,586.4 145.6,603.9 139.8,621.4 142.7,647.6 150,673.8" fill="none" stroke="#b9d9ea" stroke-width="2" stroke-linejoin="round" stroke-linecap="round" />
<g class="faint"><text x="781" y="437" class="it" text-anchor="middle">Samburu</text><text x="961" y="414" class="it" text-anchor="middle">Wajir</text><text x="870" y="450" class="it" text-anchor="middle">Isiolo</text><text x="975" y="538" class="it" text-anchor="middle">Garissa</text><text x="700" y="589" class="it" text-anchor="middle">Narok</text><text x="763" y="623" class="it" text-anchor="middle">Kajiado</text><text x="860" y="597" class="it" text-anchor="middle">Kitui</text><text x="925" y="600" class="it" text-anchor="middle">Tana River</text><text x="905" y="539" class="c1" text-anchor="middle">Garissa</text><text x="817" y="522" class="c1" text-anchor="middle">Meru</text><text x="726" y="519" class="c1" text-anchor="middle">Nakuru</text><text x="653" y="508" class="c1" text-anchor="middle">Kisumu</text><text x="648" y="540" class="c1" text-anchor="middle">Kisii</text><text x="782" y="561" class="c1" text-anchor="middle">Thika</text><text x="636" y="486" class="c1" text-anchor="middle">Busia</text><text x="769.5" y="599.5" class="c1" text-anchor="middle">Nairobi</text><text x="932" y="732" class="c1" text-anchor="middle">Mombasa</text><text x="838" y="487" class="co" text-anchor="middle">Kenya</text></g>
<g class="labels"><text x="183" y="215" class="c2" text-anchor="middle" >Obo</text><text x="471" y="166" class="c2" text-anchor="middle" >Bor</text><text x="421" y="269" class="c2" text-anchor="middle" >Yei</text><text x="453" y="305" class="c2" text-anchor="middle" >Yumbe</text><text x="35" y="310" class="c2" text-anchor="middle" >Likati</text><text x="82" y="344" class="c2" text-anchor="middle" >Buta</text><text x="247" y="363" class="c2" text-anchor="middle" >Isiro</text><text x="513" y="364" class="c2" text-anchor="middle" >Gulu</text><text x="547" y="393" class="c2" text-anchor="middle" >Lira</text><text x="459" y="420" class="c2" text-anchor="middle" >Hoima</text><text x="352" y="474" class="c2" text-anchor="middle" >Beni</text><text x="387" y="492" class="c2" text-anchor="middle" >Kasese</text><text x="343" y="513" class="c2" text-anchor="middle" >Butembo</text><text x="597" y="443" class="c2" text-anchor="middle" >Mbale</text><text x="604" y="460" class="c2" text-anchor="middle" >City</text><text x="580" y="486" class="c2" text-anchor="middle" >Iganga</text><text x="419" y="537" class="c2" text-anchor="middle" >Mbarara</text><text x="482" y="541" class="c2" text-anchor="middle" >Masaka</text><text x="486" y="578" class="c2" text-anchor="middle" >Bukoba</text><text x="598" y="587" class="c2" text-anchor="middle" >Musoma</text><text x="386" y="592" class="c2" text-anchor="middle" >Gicumbi</text><text x="547" y="646" class="c2" text-anchor="middle" >Mwanza</text><text x="317" y="664" class="c2" text-anchor="middle" >Bukavu</text><text x="401" y="664" class="c2" text-anchor="middle" >Muyinga</text><text x="150" y="690" class="c2" text-anchor="middle" >Kindu</text><text x="350" y="729" class="c2" text-anchor="middle" >Rumonge</text><text x="578" y="732" class="c2" text-anchor="middle" >Shinyanga</text><text x="405" y="747" class="c2" text-anchor="middle" >Makamba</text><text x="331" y="754" class="c2" text-anchor="middle" >Baraka</text><text x="362" y="799" class="c2" text-anchor="middle" >Kigoma</text><text x="211" y="808" class="c2" text-anchor="middle" >Kongolo</text><text x="208" y="887" class="c2" text-anchor="middle" >Ankoro</text><text x="799" y="712" class="c2" text-anchor="middle" >Moshi</text><text x="900" y="791" class="c2" text-anchor="middle" >Tanga</text><text x="1078" y="299" class="c2" text-anchor="middle" >Garbahaarey</text><text x="1173" y="252" class="c2" text-anchor="middle" >Xudur</text><text x="1247" y="218" class="c2" text-anchor="middle" >Beledweyne</text><text x="1305" y="166" class="c2" text-anchor="middle" >Caabudwaaq</text><text x="1289" y="348" class="c2" text-anchor="middle" >Jowhar</text><text x="1209" y="422" class="c2" text-anchor="middle" >Qoryooley</text><text x="1081" y="389" class="c2" text-anchor="middle" >Baardheere</text><text x="1096" y="508" class="c2" text-anchor="middle" >Kismaayo</text><text x="653" y="429" class="c2" text-anchor="middle" >Bukwo</text><text x="958" y="685" class="c2" text-anchor="middle" >Malindi</text><text x="10" y="433" class="c2" text-anchor="start" >isoko</text><text x="10" y="887" class="c2" text-anchor="start" >Ngandajika</text><text x="1153" y="186" class="c2" text-anchor="middle" >ጎዴ / Gode</text><text x="1129" y="485" class="c2" text-anchor="middle" >Jilib</text><text x="1166" y="485" class="ar" text-anchor="middle" >جيليب</text><text x="1222" y="152" class="c2" text-anchor="middle" >Shilabo</text><text x="137" y="148" class="c2" text-anchor="middle" >Haut-Mbomou</text><text x="529" y="508" class="c1" text-anchor="middle" >Kampala</text><text x="472" y="252" class="c1" text-anchor="middle" >Juba</text><text x="397" y="412" class="c1" text-anchor="middle" >Bunia</text><text x="762" y="693" class="c1" text-anchor="middle" >Arusha</text><text x="336" y="840" class="c1" text-anchor="middle" >Kalemie</text><text x="911" y="890" class="c1" text-anchor="middle" >Dar es-Salaam</text><text x="1227" y="385" class="c1" text-anchor="middle" >Muqdisho</text><text x="1829" y="765" class="c1" text-anchor="middle" >Victoria</text><text x="1293" y="385" class="ar1" text-anchor="middle" >مقديشو</text><text x="292" y="208" class="it" text-anchor="middle" >Western</text><text x="292" y="223" class="it" text-anchor="middle" >Equatoria</text><text x="106" y="305" class="it" text-anchor="middle" >Bas-Uele</text><text x="306" y="322" class="it" text-anchor="middle" >Haut-Uele</text><text x="336" y="422" class="it" text-anchor="middle" >Ituri</text><text x="80" y="471" class="it" text-anchor="middle" >Tshopo</text><text x="314" y="550" class="it" text-anchor="middle" >Nord-Kivu</text><text x="636" y="615" class="it" text-anchor="middle" >Mara</text><text x="454" y="612" class="it" text-anchor="middle" >Kagera</text><text x="627" y="688" class="it" text-anchor="middle" >Simiyu</text><text x="493" y="697" class="it" text-anchor="middle" >Geita</text><text x="278" y="694" class="it" text-anchor="middle" >Sud-Kivu</text><text x="157" y="707" class="it" text-anchor="middle" >Maniema</text><text x="419" y="769" class="it" text-anchor="middle" >Kigoma</text><text x="548.8" y="811" class="it" text-anchor="middle" >Tabora</text><text x="86" y="856" class="it" text-anchor="middle" >Lomami</text><text x="279" y="872" class="it" text-anchor="middle" >Tanganyika</text><text x="472" y="885" class="it" text-anchor="middle" >Katavi</text><text x="649.4" y="839" class="it" text-anchor="middle" >Singida</text><text x="717" y="670" class="it" text-anchor="middle" >Arusha</text><text x="776" y="777" class="it" text-anchor="middle" >Manyara</text><text x="861" y="817" class="it" text-anchor="middle" >Tanga</text><text x="1385" y="170" class="it" text-anchor="middle" >Galmudug</text><text x="1071" y="467" class="it" text-anchor="middle" >Jubaland</text><text x="785" y="169" class="it" text-anchor="middle" >Southern</text><text x="785" y="184" class="it" text-anchor="middle" >Nations,</text><text x="10" y="707" class="it" text-anchor="start" >nkuru</text><text x="10" y="200" class="it" text-anchor="start" >om</text><text x="545" y="228" class="it" text-anchor="start" >Eastern</text><text x="540" y="242" class="it" text-anchor="start" >Equatoria</text><text x="524" y="458" class="co" text-anchor="middle" >Uganda</text><text x="363" y="625" class="co" text-anchor="middle" >Rwanda</text><text x="375" y="707" class="co" text-anchor="middle" >Burundi</text><text x="668" y="873" class="co" text-anchor="middle" >Tanzania</text><text x="1192" y="320" class="co" text-anchor="middle" >Soomaaliya</text><text x="1192" y="340" class="arb" text-anchor="middle" >الصومال</text><text x="1707" y="836" class="co2" text-anchor="middle" >Sesel</text><text x="1080" y="314" class="ar" text-anchor="middle" >جربهاري</text><text x="1172" y="269" class="ar" text-anchor="middle" >حودور</text><text x="1248" y="234" class="ar" text-anchor="middle" >بلد وين</text><text x="1305" y="182" class="ar" text-anchor="middle" >عابدواغ</text><text x="1383" y="186" class="ar" text-anchor="middle" >غامدوغ</text><text x="1281" y="364" class="ar" text-anchor="middle" >جوهر</text><text x="1209" y="438" class="ar" text-anchor="middle" >قوريولي</text><text x="1081" y="406" class="ar" text-anchor="middle" >بارديرآ</text><text x="1071" y="483" class="ar" text-anchor="middle" >جوبالاند</text><text x="1096" y="524" class="ar" text-anchor="middle" >كيسمايو</text><circle cx="183" cy="199" r="2.2" fill="#fff" stroke="#777" stroke-width="1"/><circle cx="471" cy="152" r="2.2" fill="#fff" stroke="#777" stroke-width="1"/><circle cx="421" cy="274" r="2.2" fill="#fff" stroke="#777" stroke-width="1"/><circle cx="453" cy="310" r="2.2" fill="#fff" stroke="#777" stroke-width="1"/><circle cx="35" cy="315" r="2.2" fill="#fff" stroke="#777" stroke-width="1"/><circle cx="82" cy="349" r="2.2" fill="#fff" stroke="#777" stroke-width="1"/><circle cx="247" cy="348" r="2.2" fill="#fff" stroke="#777" stroke-width="1"/><circle cx="513" cy="349" r="2.2" fill="#fff" stroke="#777" stroke-width="1"/><circle cx="547" cy="378" r="2.2" fill="#fff" stroke="#777" stroke-width="1"/><circle cx="459" cy="425" r="2.2" fill="#fff" stroke="#777" stroke-width="1"/><circle cx="352" cy="479" r="2.2" fill="#fff" stroke="#777" stroke-width="1"/><circle cx="387" cy="496" r="2.2" fill="#fff" stroke="#777" stroke-width="1"/><circle cx="343" cy="498" r="2.2" fill="#fff" stroke="#777" stroke-width="1"/><circle cx="620" cy="445.6" r="2.2" fill="#fff" stroke="#777" stroke-width="1"/><circle cx="581" cy="471.7" r="2.2" fill="#fff" stroke="#777" stroke-width="1"/><circle cx="419" cy="541" r="2.2" fill="#fff" stroke="#777" stroke-width="1"/><circle cx="482" cy="526" r="2.2" fill="#fff" stroke="#777" stroke-width="1"/><circle cx="486" cy="583" r="2.2" fill="#fff" stroke="#777" stroke-width="1"/><circle cx="598" cy="592" r="2.2" fill="#fff" stroke="#777" stroke-width="1"/><circle cx="386" cy="597" r="2.2" fill="#fff" stroke="#777" stroke-width="1"/><circle cx="547" cy="650" r="2.2" fill="#fff" stroke="#777" stroke-width="1"/><circle cx="317" cy="649" r="2.2" fill="#fff" stroke="#777" stroke-width="1"/><circle cx="401" cy="668" r="2.2" fill="#fff" stroke="#777" stroke-width="1"/><circle cx="150" cy="674" r="2.2" fill="#fff" stroke="#777" stroke-width="1"/><circle cx="350" cy="733" r="2.2" fill="#fff" stroke="#777" stroke-width="1"/><circle cx="578" cy="717" r="2.2" fill="#fff" stroke="#777" stroke-width="1"/><circle cx="371" cy="742.4" r="2.2" fill="#fff" stroke="#777" stroke-width="1"/><circle cx="331" cy="740.2" r="2.2" fill="#fff" stroke="#777" stroke-width="1"/><circle cx="362" cy="784" r="2.2" fill="#fff" stroke="#777" stroke-width="1"/><circle cx="211" cy="813" r="2.2" fill="#fff" stroke="#777" stroke-width="1"/><circle cx="208" cy="892" r="2.2" fill="#fff" stroke="#777" stroke-width="1"/><circle cx="38" cy="892" r="2.2" fill="#fff" stroke="#777" stroke-width="1"/><circle cx="799" cy="697" r="2.2" fill="#fff" stroke="#777" stroke-width="1"/><circle cx="900" cy="796" r="2.2" fill="#fff" stroke="#777" stroke-width="1"/><circle cx="1173" cy="273" r="2.2" fill="#fff" stroke="#777" stroke-width="1"/><circle cx="1247" cy="237" r="2.2" fill="#fff" stroke="#777" stroke-width="1"/><circle cx="1265" cy="348" r="2.2" fill="#fff" stroke="#777" stroke-width="1"/><circle cx="1209" cy="405" r="2.2" fill="#fff" stroke="#777" stroke-width="1"/><circle cx="1081" cy="374" r="2.2" fill="#fff" stroke="#777" stroke-width="1"/><circle cx="1096" cy="526" r="2.2" fill="#fff" stroke="#777" stroke-width="1"/><circle cx="1110" cy="480" r="2.2" fill="#fff" stroke="#777" stroke-width="1"/><circle cx="1222" cy="159" r="2.2" fill="#fff" stroke="#777" stroke-width="1"/><circle cx="1153" cy="168" r="2.2" fill="#fff" stroke="#777" stroke-width="1"/><circle cx="397" cy="418" r="3.2" fill="#fff" stroke="#777" stroke-width="1"/><circle cx="762" cy="699" r="3.2" fill="#fff" stroke="#777" stroke-width="1"/><circle cx="336" cy="846" r="3.2" fill="#fff" stroke="#777" stroke-width="1"/><circle cx="911" cy="896" r="3.2" fill="#fff" stroke="#777" stroke-width="1"/><circle cx="529" cy="490" r="3.600" fill="#fff" stroke="#666" stroke-width="1"/><circle cx="529" cy="490" r="1.300" fill="#666"/><circle cx="472" cy="231" r="3.600" fill="#fff" stroke="#666" stroke-width="1"/><circle cx="472" cy="231" r="1.300" fill="#666"/><circle cx="1256" cy="391" r="3.600" fill="#fff" stroke="#666" stroke-width="1"/><circle cx="1256" cy="391" r="1.300" fill="#666"/></g>
<g><path d="M650,300 662,369 664,377.7 666,387.2 668,398 667.5,406.2 665.4,414.4 662,419.8 658,426.6 655.2,432 651,436 644.4,440.2 640.3,445.6 637.6,452.4 633.5,459.2 629.4,466 624,471.4 618.5,475.5 615.8,482.3 613,489 609,496 605.7,502.8 606.7,515.3 606.7,563.3 615,565.5 631.8,576 652.6,586.4 673.5,598.9 694.4,611.4 715.3,621.9 727.8,628 746.6,638.6 767.5,651 788.3,663.6 809.2,676 819.6,680.3 820.7,688.7 817.5,701.2 819.6,707.5 828,713.7 840.5,724 857.2,736.7 867.6,745 886,758 908,773.5 911,770 914,772 918.9,767.5 922,760 926.2,755.3 930,748 932.3,740.8 931,735 935.9,731 940,722 943.2,718.9 945.6,709.2 950.5,699.5 959,689.8 961.4,675.2 962.6,661.9 969.9,655.8 979.6,651 991.7,648.5 1001.5,641.3 1011.2,631.6 1023.3,620.6 1033,609.7 1042,601 1009,552 1008.5,484 1008.3,420 1008.3,345.4 1013.8,340.8 1021.6,333 1030.9,323.7 1038.6,312.8 1046.4,300.4 1054,289.5 1059.6,281 1052.6,279.4 1046.4,280.2 1040,279.4 1034,281 1023,281 1013.8,278.6 1007.6,272.4 990,260Z" fill="#d53e4f" fill-opacity="0.9" stroke="#7d7d7d" stroke-width="2.5" stroke-linejoin="round"/><path d="M675.6,456.9 681.9,454.8 685,456.9 689.2,454.8 693.3,457.9 694.4,464.2 691.3,469.4 693.3,477.7 696.5,486.1 698.6,494.4 696.5,501.7 690.2,503.8 688.1,496.5 683.9,490.3 679.8,484 676.6,476.7 672.5,474.6 663.1,473.6 673.5,470.4 677.7,465.2Z" fill="#e6f39f" stroke="#7d7d7d" stroke-width="2.5" stroke-linejoin="round"/><path d="M742.4,469.4 750.8,465.2 761.2,464.2 768.5,460 773.7,467.3 775.8,473.6 788.3,474.6 798.8,477.7 802.9,486.1 800.9,494.4 792.5,502.8 786.2,509.1 782.1,515.3 781,521.6 775.8,520.5 773.7,515.3 767.5,513.2 761.2,509.1 754.9,502.8 748.7,500.7 743.4,504.9 740.3,496.5 739.3,486.1 739.3,477.7Z" fill="#e6f39f" stroke="#7d7d7d" stroke-width="2.5" stroke-linejoin="round"/><path d="M761.2,523.7 767.5,519.5 773.7,515.3 775.8,520.5 781,521.6 782.1,515.3 788.3,511.1 795.6,515.3 796.7,521.6 792.5,529.9 789.4,538.3 786.2,542.5 777.9,541.4 767.5,538.3 763.3,532Z" fill="#e6f39f" stroke="#7d7d7d" stroke-width="2.5" stroke-linejoin="round"/><path d="M694.4,525.8 702.7,523.7 711.1,519.5 719.4,511.1 725.7,504.9 734.1,498.6 738.2,496.5 739.3,507 736.1,515.3 737.2,523.7 740.3,529.9 745.5,534.1 750.8,542.5 753.9,552.9 757,563.3 754.9,569.6 748.7,565.4 742.4,559.2 736.1,552.9 734.1,544.5 727.8,542.5 723.6,538.3 715.3,534.1 709,538.3 702.7,542.5 698.6,534.1Z" fill="#e6f39f" stroke="#7d7d7d" stroke-width="2.5" stroke-linejoin="round"/><path d="M635.9,512.2 644.3,511.1 656.8,511.1 669.3,510.1 677.7,509.1 681.9,513.2 683.9,517.4 673.5,517.4 667.2,523.7 663.1,527.8 654.7,525.8 646.4,521.6 637,520.5Z" fill="#fce093" stroke="#7d7d7d" stroke-width="2.5" stroke-linejoin="round"/><path d="M837.4,433.9 846.8,425.5 857.2,413 861.4,404.7 878.1,396.3 891.7,391.1 899,398.4 907.3,408.8 917.8,419.3 912.5,423.5 915.7,433.9 919.9,450.6 911.5,456.9 903.2,467.3 892.7,471.5 884.4,475.6 877.1,478.8 879.1,490.3 880.2,500.7 878.1,509.1 861.4,509.1 857.2,502.8 851,490.3 846.8,479.8 843.7,469.4 830.1,473.6 819.6,477.7 811.3,481.9 811.3,490.3 805,488.2 801.9,481.9 798.8,477.7 788.3,474.6 775.8,473.6 776.8,468.3 784.2,465.2 792.5,465.2 798.8,471.5 802.9,475.6 811.3,475.6 819.6,471.5 830.1,469.4 838.4,467.3 842.6,465.2 841.6,458.9 840.5,448.5 838.4,440.2Z" fill="#fa9666" stroke="#7d7d7d" stroke-width="2.5" stroke-linejoin="round"/><path d="M919.9,450.6 926.1,458.9 932.4,469.4 938.6,477.7 949.1,484 961.6,488.2 974.1,494.4 986.7,492.8 1008.5,484 1009,552 1042,601 965.8,621.9 961.6,598.9 957.4,584.3 953.3,571.8 949.1,561.3 944.9,550.9 940.7,540.4 932.4,530 928.2,521.6 919.9,515.3 911.5,511.1 899,509.1 886.5,510.1 879.1,509.1 880.2,500.7 879.1,490.3 877.1,478.8 884.4,475.6 892.7,471.5 903.2,467.3 911.5,456.9Z" fill="#fce093" stroke="#7d7d7d" stroke-width="2.5" stroke-linejoin="round"/><path d="M767.5,545.7 773.7,542.5 782.1,541.5 790.4,545.7 793.5,551.9 796.7,557.1 799.8,563.4 802.9,567.6 796.7,569.7 790.4,565.5 782.1,561.3 773.7,557.1 767.5,550.9Z" fill="#fa9666" stroke="#7d7d7d" stroke-width="2.5" stroke-linejoin="round"/><path d="M807.1,530 811.3,532.1 819.6,534.2 830.1,532.1 832.2,540.4 830.1,547.7 823.8,550.9 815.5,554 807.1,556.1 802.9,554 808.2,546.7 809.2,536.3Z" fill="#fa9666" stroke="#7d7d7d" stroke-width="2.5" stroke-linejoin="round"/><path d="M798.8,557.1 809.2,557.1 817.6,554 825.9,555.1 829,561.3 828,568.6 818.6,569.7 821.7,578 825.9,584.3 824.9,592.6 819.6,595.8 811.3,592.6 805,594.7 802.9,601 798.8,602 795.6,596.8 790.4,603.1 787.3,596.8 784.2,590.5 780,586.4 781,583.2 787.3,579.1 790.4,572.8 796.7,569.7 802.9,567.6 799.8,563.4Z" fill="#fce093" stroke="#7d7d7d" stroke-width="2.5" stroke-linejoin="round"/><path d="M745.5,570.7 752.8,578 763.3,582.2 773.7,586.4 777.9,590.5 784.2,596.8 789.4,603.1 788.3,611.4 796.7,617.7 807.1,623.9 815.5,628.1 819.6,632.3 815.5,638.6 821.7,646.9 828,655.3 832.2,663.6 830.1,674.1 829,685.5 821.7,686.6 819.6,680.3 809.2,676.1 788.3,663.6 767.5,651.1 746.6,638.6 727.8,628.1 726.7,617.7 728.8,603.1 727.8,592.6 734.1,584.3 742.4,578Z" fill="#fa9666" stroke="#7d7d7d" stroke-width="2.5" stroke-linejoin="round"/><path d="M763.3,580.1 767.5,577 773.7,575.9 778.9,579.1 781,583.2 775.8,586.4 769.5,586.4 765.4,584.3Z" fill="#3288bd" fill-opacity="0.95" stroke="#4b86ad" stroke-width="1.500"/><path d="M945.9,639.6 953.3,649 960.6,659.4 961.6,672 959.5,684.5 955.3,694.9 949.1,699.1 947,707.5 942.8,713.7 944.9,722.1 940.7,728.3 934.5,733.5 928.2,730.4 921.9,720 915.7,711.6 902.1,709.5 903.2,697 907.3,684.5 915.7,674.1 924,663.6 934.5,651.1Z" fill="#fa9666" stroke="#7d7d7d" stroke-width="2.5" stroke-linejoin="round"/><path d="M965.8,621.9 978.3,615.6 990,610.4 1042,601 1033,609.7 1023.3,620.6 1017,622 1011.2,631.6 1004,634 1001.5,641.3 994,643 986.7,645.9 980.4,642.7 972,643.8 966.8,638.6Z" fill="#fa9666" stroke="#7d7d7d" stroke-width="2.5" stroke-linejoin="round"/><path d="M683.9,369.2 688.1,385.9 692.3,398.4 696.5,405.7 704.8,406.8 711.1,415.1" fill="none" stroke="#7d7d7d" stroke-width="2.5" stroke-linejoin="round" stroke-linecap="round"/><path d="M711.1,415.1 719.4,425.5 727.8,438.1 736.1,444.3 742.4,450.6 748.7,456.9 750.8,465.2" fill="none" stroke="#7d7d7d" stroke-width="2.5" stroke-linejoin="round" stroke-linecap="round"/><path d="M711.1,415.1 709,427.6 706.9,433.9 705.9,448.5 704.8,458.9 700.6,469.4 702.7,481.9 705.9,490.3 702.7,496.5 696.5,501.7" fill="none" stroke="#7d7d7d" stroke-width="2.5" stroke-linejoin="round" stroke-linecap="round"/><path d="M763.3,369.2 761.2,379.6 754.9,388 752.8,402.6 750.8,413 742.4,419.3 744.5,425.5 748.7,429.7 747.6,440.2 748.7,450.6 748.7,456.9" fill="none" stroke="#7d7d7d" stroke-width="2.5" stroke-linejoin="round" stroke-linecap="round"/><path d="M754.9,369.2 763.3,374.4" fill="none" stroke="#7d7d7d" stroke-width="2.5" stroke-linejoin="round" stroke-linecap="round"/><path d="M769.5,369.2 773.7,381.7 777.9,392.1 788.3,396.3 796.7,402.6 802.9,410.9 809.2,419.3 814.4,427.6 823.8,426.6 832.2,425.5 837.4,433.9" fill="none" stroke="#7d7d7d" stroke-width="2.5" stroke-linejoin="round" stroke-linecap="round"/><path d="M891.7,367.1 891.7,391.1" fill="none" stroke="#7d7d7d" stroke-width="2.5" stroke-linejoin="round" stroke-linecap="round"/><path d="M652.6,431.8 661,434.9 669.3,438.1 677.7,442.2 683.9,447.5 688.1,445.4 694.4,438.1 702.7,434.9 706.9,433.9" fill="none" stroke="#7d7d7d" stroke-width="2.5" stroke-linejoin="round" stroke-linecap="round"/><path d="M642.2,440.2 646.4,448.5 650.5,452.7 656.8,458.9 658.9,463.1 665.2,458.9 670.4,457.9 675.6,456.9" fill="none" stroke="#7d7d7d" stroke-width="2.5" stroke-linejoin="round" stroke-linecap="round"/><path d="M683.9,447.5 686,452.7 689.2,454.8" fill="none" stroke="#7d7d7d" stroke-width="2.5" stroke-linejoin="round" stroke-linecap="round"/><path d="M683.9,447.5 692.3,454.8 698.6,463.1 700.6,469.4" fill="none" stroke="#7d7d7d" stroke-width="2.5" stroke-linejoin="round" stroke-linecap="round"/><path d="M631.8,458.9 633.8,469.4 638,475.6 646.4,475.6 654.7,471.5 663.1,463.1 658.9,463.1" fill="none" stroke="#7d7d7d" stroke-width="2.5" stroke-linejoin="round" stroke-linecap="round"/><path d="M617.1,473.6 623.4,477.7 631.8,481.9 638,475.6" fill="none" stroke="#7d7d7d" stroke-width="2.5" stroke-linejoin="round" stroke-linecap="round"/><path d="M631.8,481.9 633.8,490.3 638,496.5 644.3,498.6 652.6,498.6 661,494.4 663.1,486.1 661,477.7 663.1,473.6" fill="none" stroke="#7d7d7d" stroke-width="2.5" stroke-linejoin="round" stroke-linecap="round"/><path d="M608.8,494.4 619.2,490.3 627.6,490.3 633.8,490.3" fill="none" stroke="#7d7d7d" stroke-width="2.5" stroke-linejoin="round" stroke-linecap="round"/><path d="M635.9,512.2 631.8,507 633.8,498.6 638,496.5" fill="none" stroke="#7d7d7d" stroke-width="2.5" stroke-linejoin="round" stroke-linecap="round"/><path d="M681.9,513.2 688.1,509.1 690.2,503.8" fill="none" stroke="#7d7d7d" stroke-width="2.5" stroke-linejoin="round" stroke-linecap="round"/><path d="M661,494.4 669.3,498.6 677.7,502.8 677.7,509.1" fill="none" stroke="#7d7d7d" stroke-width="2.5" stroke-linejoin="round" stroke-linecap="round"/><path d="M607.7,527.8 615.1,525.8 623.4,529.9 631.8,525.8 637,520.5" fill="none" stroke="#7d7d7d" stroke-width="2.5" stroke-linejoin="round" stroke-linecap="round"/><path d="M663.1,527.8 669.3,532 677.7,529.9 683.9,525.8 688.1,519.5 683.9,517.4" fill="none" stroke="#7d7d7d" stroke-width="2.5" stroke-linejoin="round" stroke-linecap="round"/><path d="M694.4,525.8 688.1,519.5" fill="none" stroke="#7d7d7d" stroke-width="2.5" stroke-linejoin="round" stroke-linecap="round"/><path d="M696.5,501.7 700.6,509.1 706.9,511.1 711.1,519.5" fill="none" stroke="#7d7d7d" stroke-width="2.5" stroke-linejoin="round" stroke-linecap="round"/><path d="M739.3,507 744.5,509.1 750.8,504.9 754.9,502.8" fill="none" stroke="#7d7d7d" stroke-width="2.5" stroke-linejoin="round" stroke-linecap="round"/><path d="M737.2,523.7 744.5,519.5 750.8,523.7 757,532 761.2,523.7" fill="none" stroke="#7d7d7d" stroke-width="2.5" stroke-linejoin="round" stroke-linecap="round"/><path d="M750.8,542.5 759.1,540.4 763.3,532" fill="none" stroke="#7d7d7d" stroke-width="2.5" stroke-linejoin="round" stroke-linecap="round"/><path d="M759.1,540.4 763.3,548.7 767.5,544.5" fill="none" stroke="#7d7d7d" stroke-width="2.5" stroke-linejoin="round" stroke-linecap="round"/><path d="M786.2,542.5 790.4,546.6" fill="none" stroke="#7d7d7d" stroke-width="2.5" stroke-linejoin="round" stroke-linecap="round"/><path d="M795.6,515.3 800.9,519.5 806.1,525.8" fill="none" stroke="#7d7d7d" stroke-width="2.5" stroke-linejoin="round" stroke-linecap="round"/><path d="M800.9,494.4 807.1,498.6 815.5,500.7 823.8,507 832.2,504.9 840.5,507 851,511.1 861.4,509.1" fill="none" stroke="#7d7d7d" stroke-width="2.5" stroke-linejoin="round" stroke-linecap="round"/><path d="M796.7,521.6 802.9,523.7 806.1,525.8" fill="none" stroke="#7d7d7d" stroke-width="2.5" stroke-linejoin="round" stroke-linecap="round"/><path d="M806.1,525.8 811.3,519.5 819.6,521.6 830.1,519.5 840.5,515.3 851,511.1" fill="none" stroke="#7d7d7d" stroke-width="2.5" stroke-linejoin="round" stroke-linecap="round"/><path d="M831.1,532 840.5,523.7 851,511.1" fill="none" stroke="#7d7d7d" stroke-width="2.5" stroke-linejoin="round" stroke-linecap="round"/><path d="M861.4,509.1 867.7,519.5 873.9,532 882.3,546.6 888.5,559.2 892.7,571.7 894.8,580" fill="none" stroke="#7d7d7d" stroke-width="2.5" stroke-linejoin="round" stroke-linecap="round"/><path d="M606.7,556.1 617.1,553 625.5,548.8 635.9,550.9 644.3,548.8 647.4,540.4" fill="none" stroke="#7d7d7d" stroke-width="2.5" stroke-linejoin="round" stroke-linecap="round"/><path d="M644.3,563.4 652.6,559.2 663.1,557.1 671.4,557.1 677.7,561.3 688.1,561.3 694.4,555.1 692.3,546.7 696.5,540.4 702.7,542.5 706.9,538.4" fill="none" stroke="#7d7d7d" stroke-width="2.5" stroke-linejoin="round" stroke-linecap="round"/><path d="M644.3,563.4 642.2,567.6 648.5,575.9 652.6,586.4" fill="none" stroke="#7d7d7d" stroke-width="2.5" stroke-linejoin="round" stroke-linecap="round"/><path d="M644.3,563.4 646.4,553 647.4,540.4 652.6,534.2 661,530" fill="none" stroke="#7d7d7d" stroke-width="2.5" stroke-linejoin="round" stroke-linecap="round"/><path d="M658.9,538.4 665.2,536.3 671.4,540.4 671.4,557.1" fill="none" stroke="#7d7d7d" stroke-width="2.5" stroke-linejoin="round" stroke-linecap="round"/><path d="M671.4,540.4 677.7,534.2 681.9,530" fill="none" stroke="#7d7d7d" stroke-width="2.5" stroke-linejoin="round" stroke-linecap="round"/><path d="M677.7,544.6 688.1,542.5 692.3,546.7" fill="none" stroke="#7d7d7d" stroke-width="2.5" stroke-linejoin="round" stroke-linecap="round"/><path d="M606.7,534.2 615.1,536.3 623.4,532.1 631.8,534.2 640.1,530" fill="none" stroke="#7d7d7d" stroke-width="2.5" stroke-linejoin="round" stroke-linecap="round"/><path d="M754.9,569.7 752.8,578 763.3,582.2" fill="none" stroke="#7d7d7d" stroke-width="2.5" stroke-linejoin="round" stroke-linecap="round"/><path d="M754.9,557.1 763.3,555.1 767.5,550.9" fill="none" stroke="#7d7d7d" stroke-width="2.5" stroke-linejoin="round" stroke-linecap="round"/><path d="M757,563.4 767.5,565.5 777.9,569.7 787.3,579.1" fill="none" stroke="#7d7d7d" stroke-width="2.5" stroke-linejoin="round" stroke-linecap="round"/><path d="M825.9,584.3 830.1,596.8 834.3,613.5 836.3,628.1 842.6,638.6 848.9,646.9 855.1,655.3 861.4,667.8 865.6,676.1 876,679.3 888.5,678.2 903.2,680.3" fill="none" stroke="#7d7d7d" stroke-width="2.5" stroke-linejoin="round" stroke-linecap="round"/><path d="M832.2,663.6 840.5,661.5 846.8,660.5 853,663.6 859.3,669.9 865.6,676.1" fill="none" stroke="#7d7d7d" stroke-width="2.5" stroke-linejoin="round" stroke-linecap="round"/><path d="M871.8,530 878.1,540.4 886.5,553 890.6,563.4 892.7,582.2 893.8,598.9 894.8,613.5 890.6,623.9 886.5,634.4 880.2,640.6 875,643.8 878.1,651.1 886.5,663.6 894.8,674.1 903.2,680.3" fill="none" stroke="#7d7d7d" stroke-width="2.5" stroke-linejoin="round" stroke-linecap="round"/><path d="M903.2,680.3 905.2,688.7 902.1,709.5" fill="none" stroke="#7d7d7d" stroke-width="2.5" stroke-linejoin="round" stroke-linecap="round"/><path d="M902.1,709.5 896.9,713.7 890.6,715.8 894.8,722.1 892.7,730.4 882.3,736.7 869.7,742.9 857.2,736.7" fill="none" stroke="#7d7d7d" stroke-width="2.5" stroke-linejoin="round" stroke-linecap="round"/><path d="M832.2,540.4 836.3,550.9 834.3,563.4 829,561.3" fill="none" stroke="#7d7d7d" stroke-width="2.5" stroke-linejoin="round" stroke-linecap="round"/><path d="M832.2,540.4 840.5,536.3 851,538.4 861.4,534.2 871.8,530" fill="none" stroke="#7d7d7d" stroke-width="2.5" stroke-linejoin="round" stroke-linecap="round"/><path d="M989,368.7 995,375 1003,381 1008,382.7" fill="none" stroke="#7d7d7d" stroke-width="2.5" stroke-linejoin="round" stroke-linecap="round"/><path d="M1000,628 l4,-4 3,3 4,-5 3,2 -3,5 5,-2 M1012,618 l4,-4 4,2 -3,4 M1022,610 l4,-3 2,3 M993,640 l-3,4 4,2 3,-4" fill="none" stroke="#7d7d7d" stroke-width="2.200" stroke-linecap="round" stroke-linejoin="round"/><path d="M929,732 l6,-3 1,8 -3,7 -5,2 z" fill="#7d7d7d"/></g>
<clipPath id="kclip"><path d="M650,300 662,369 664,377.7 666,387.2 668,398 667.5,406.2 665.4,414.4 662,419.8 658,426.6 655.2,432 651,436 644.4,440.2 640.3,445.6 637.6,452.4 633.5,459.2 629.4,466 624,471.4 618.5,475.5 615.8,482.3 613,489 609,496 605.7,502.8 606.7,515.3 606.7,563.3 615,565.5 631.8,576 652.6,586.4 673.5,598.9 694.4,611.4 715.3,621.9 727.8,628 746.6,638.6 767.5,651 788.3,663.6 809.2,676 819.6,680.3 820.7,688.7 817.5,701.2 819.6,707.5 828,713.7 840.5,724 857.2,736.7 867.6,745 886,758 908,773.5 911,770 914,772 918.9,767.5 922,760 926.2,755.3 930,748 932.3,740.8 931,735 935.9,731 940,722 943.2,718.9 945.6,709.2 950.5,699.5 959,689.8 961.4,675.2 962.6,661.9 969.9,655.8 979.6,651 991.7,648.5 1001.5,641.3 1011.2,631.6 1023.3,620.6 1033,609.7 1042,601 1009,552 1008.5,484 1008.3,420 1008.3,345.4 1013.8,340.8 1021.6,333 1030.9,323.7 1038.6,312.8 1046.4,300.4 1054,289.5 1059.6,281 1052.6,279.4 1046.4,280.2 1040,279.4 1034,281 1023,281 1013.8,278.6 1007.6,272.4 990,260Z"/></clipPath>
<g opacity=".13" clip-path="url(#kclip)"><text x="769.5" y="599.5" class="c1" text-anchor="middle">Nairobi</text><text x="763" y="623.5" class="it" text-anchor="middle">Kajiado</text><text x="870" y="450" class="it" text-anchor="middle">Isiolo</text><text x="975" y="538" class="it" text-anchor="middle">Garissa</text><text x="782" y="561" class="c1" text-anchor="middle">Thika</text><text x="838" y="487" class="co" text-anchor="middle">Kenya</text><text x="958" y="685" class="c2" text-anchor="middle">Malindi</text></g>
</svg>
<!--/MAPSVG-->
<!--OVER-->
<!-- zoom control -->
<div class="abs" style="left:12.500px;top:12.500px;width:42.500px;height:81.200px;border:2.500px solid rgba(0,0,0,0.2);border-radius:5px;background-clip:padding-box;background:#fff;overflow:hidden">
<div style="height:37.500px;border-bottom:1.200px solid #ccc;text-align:center;font:normal 27px/39px 'Liberation Sans','DejaVu Sans',sans-serif;color:#000;-webkit-text-stroke:.9px #000">+</div>
<div style="height:37.500px;text-align:center;font:normal 27px/43px 'Liberation Sans','DejaVu Sans',sans-serif;color:#000;-webkit-text-stroke:.9px #000">&#x2212;</div>
</div>
<!-- layers control -->
<div class="abs lc" style="left:1714.500px;top:13.500px;width:172.500px;height:104px;border:2.500px solid rgba(0,0,0,0.2);border-radius:6px;background:#fff;background-clip:padding-box;font-size:16.250px;color:#333">
<span class="abs" style="left:13.500px;top:12px;width:15px;height:15px;border-radius:50%;border:1.500px solid #6b6b6b;background:#fff"></span>
<span class="abs" style="left:37.500px;top:9.500px;line-height:20px">OpenStreetMap</span>
<span class="abs" style="left:13.500px;top:36.500px;width:15px;height:15px;border-radius:50%;border:2px solid #0a62d6;background:#fff"></span>
<span class="abs" style="left:17.500px;top:40.500px;width:7px;height:7px;border-radius:50%;background:#0a62d6"></span>
<span class="abs" style="left:37.500px;top:34.500px;line-height:20px">cycleOsm</span>
<span class="abs" style="left:0;top:61.500px;width:167.500px;height:1.200px;background:#ddd"></span>
<span class="abs" style="left:11px;top:73px;width:17px;height:17px;border-radius:2.500px;background:#0a62d6"></span>
<svg class="abs" style="left:11px;top:73px" width="17" height="17" viewBox="0 0 17 17"><path d="M3.500 8.800l3.300 3.400 6.500-7.400" stroke="#fff" stroke-width="2.300" fill="none" stroke-linecap="round" stroke-linejoin="round"/></svg>
<span class="abs" style="left:36px;top:71.500px;line-height:20px">countySanitation</span>
</div>
<!-- legend -->
<div class="abs" style="left:1786px;top:567px;width:102px;height:150px;border-radius:6px;background:rgba(255,255,255,0.8);box-shadow:0 0 18px rgba(0,0,0,0.2);font-size:17.500px;color:#555">
<span class="abs" style="left:10px;top:6.5px;width:22.500px;height:22.500px;background:#d53e4f;opacity:.7"></span>
<span class="abs" style="left:10px;top:29px;width:22.500px;height:22.500px;background:#fc8d59;opacity:.7"></span>
<span class="abs" style="left:10px;top:51.5px;width:22.500px;height:22.500px;background:#fee08b;opacity:.7"></span>
<span class="abs" style="left:10px;top:74px;width:22.500px;height:22.500px;background:#e6f598;opacity:.7"></span>
<span class="abs" style="left:10px;top:96.5px;width:22.500px;height:22.500px;background:#99d594;opacity:.7"></span>
<span class="abs" style="left:10px;top:119px;width:22.500px;height:22.500px;background:#3288bd;opacity:.7"></span>
<span class="abs lg" style="left:42.500px;top:6.5px">0&#8211;2</span>
<span class="abs lg" style="left:42.500px;top:29px">2&#8211;4</span>
<span class="abs lg" style="left:42.500px;top:51.5px">4&#8211;6</span>
<span class="abs lg" style="left:42.500px;top:74px">6&#8211;10</span>
<span class="abs lg" style="left:42.500px;top:96.5px">10&#8211;20</span>
<span class="abs lg" style="left:42.500px;top:119px">20+</span>
</div>
<!-- attribution -->
<div class="abs" id="attr" style="right:0;bottom:0;height:21px;padding:0 6.250px;background:rgba(255,255,255,0.8);font-size:14.45px;line-height:21px;color:#333;white-space:nowrap"><svg width="15" height="10" viewBox="0 0 12 8" style="display:inline-block;vertical-align:baseline;margin-right:4px"><path fill="#4C7BE1" d="M0 0h12v4H0z"/><path fill="#FFD500" d="M0 4h12v3H0z"/><path fill="#E0BC00" d="M0 7h12v1H0z"/></svg><span class="lk">Leaflet</span> <span>|</span> &copy; <span class="lk">OpenStreetMap</span><span class="lk">, CyclOSM</span> | Map data: &copy; <span class="lk">OpenStreetMap</span> contributors</div>
<!-- popup -->
<div class="abs" style="left:563px;top:35px;width:433.500px;height:183px;border-radius:15px;background:#fff;box-shadow:0 3.750px 17.500px rgba(0,0,0,0.4);font-size:16.250px;line-height:21px;color:#333">
<div class="abs" style="left:26.500px;top:17.500px;width:378px"><b>Total County Population:</b><br>459785<br><br><b>% of Conventional Households with access to main sewer:</b><br><br>0.1</div>
<svg class="abs" style="left:413px;top:10.500px" width="12" height="12" viewBox="0 0 12 12"><path d="M1.500 1.500l9 9M10.500 1.500l-9 9" stroke="#757575" stroke-width="1.300" fill="none"/></svg>
</div>
<div class="abs" style="left:755px;top:218px;width:50px;height:25px;overflow:hidden"><div style="width:21.250px;height:21.250px;margin:-10.625px auto 0;background:#fff;transform:rotate(45deg);box-shadow:0 3.750px 17.500px rgba(0,0,0,0.4)"></div></div>

<!--/OVER-->
</div>
</body>
</html>
